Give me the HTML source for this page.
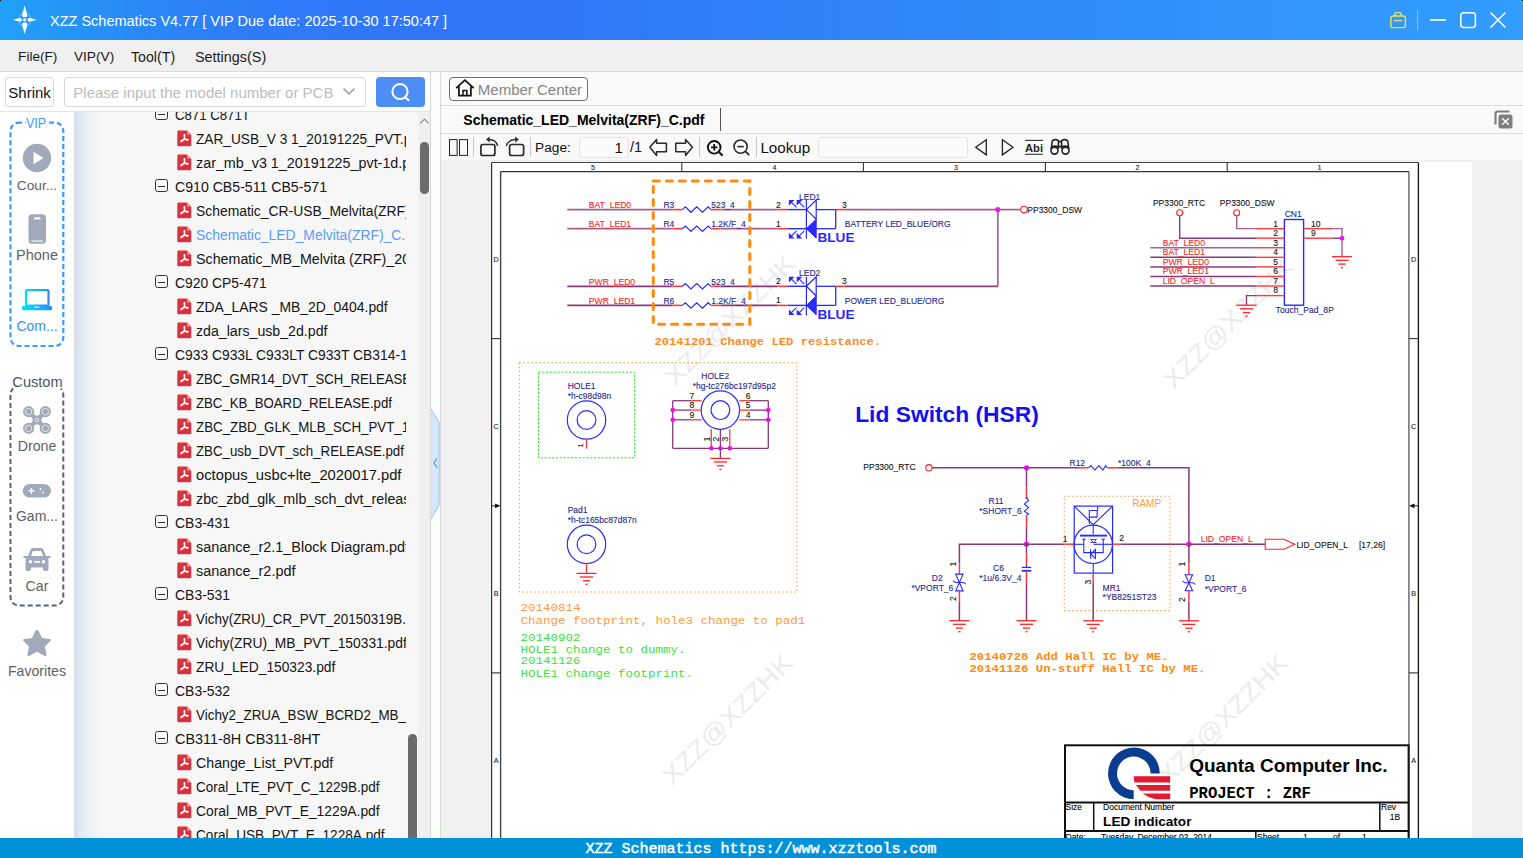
<!DOCTYPE html>
<html><head><meta charset="utf-8">
<style>
html,body{margin:0;padding:0;}
body{width:1523px;height:858px;overflow:hidden;position:relative;background:#fff;font-family:'Liberation Sans', sans-serif;}
.a{position:absolute;}
</style></head><body>

<div class="a" style="left:0;top:0;width:1523px;height:40px;background:linear-gradient(90deg,#20A1F6 0%,#2A89F7 9%,#2F7BF8 17%,#3176F8 26%,#3177F8 36%,#2F8AF9 65%,#319DFF 100%);"></div>
<div class="a" style="left:0;top:0;width:1px;height:1px;background:#000"></div><div class="a" style="left:1522px;top:0;width:1px;height:1px;background:#000"></div>
<svg class="a" style="left:8px;top:3px" width="34" height="34" viewBox="0 0 34 34">
<circle cx="16.7" cy="16.8" r="6.4" fill="none" stroke="rgba(255,255,255,0.4)" stroke-width="1" stroke-dasharray="4.2 5.8" stroke-dashoffset="-2.9"/>
<path d="M16.7 2.6 C17.6 6.5 19.3 10.5 19.3 12.2 C19.3 13.7 18.1 14.2 16.7 14.2 C15.3 14.2 14.1 13.7 14.1 12.2 C14.1 10.5 15.8 6.5 16.7 2.6 Z" fill="#fff"/>
<path d="M16.7 31 C17.6 27.1 19.3 23.1 19.3 21.4 C19.3 19.9 18.1 19.4 16.7 19.4 C15.3 19.4 14.1 19.9 14.1 21.4 C14.1 23.1 15.8 27.1 16.7 31 Z" fill="#fff"/>
<path d="M4.6 16.8 C8 15.9 11 15 12.2 15 C13.4 15 13.9 15.8 13.9 16.8 C13.9 17.8 13.4 18.6 12.2 18.6 C11 18.6 8 17.7 4.6 16.8 Z" fill="#fff"/>
<path d="M28.8 16.8 C25.4 15.9 22.4 15 21.2 15 C20 15 19.5 15.8 19.5 16.8 C19.5 17.8 20 18.6 21.2 18.6 C22.4 18.6 25.4 17.7 28.8 16.8 Z" fill="#fff"/>
<circle cx="16.7" cy="16.8" r="1.6" fill="#fff"/>
</svg>
<div style="position:absolute;left:50px;top:13.18px;font:normal 14.5px 'Liberation Sans', sans-serif;line-height:16.67px;color:#fff;white-space:pre;">XZZ Schematics V4.77 [ VIP Due date: 2025-10-30 17:50:47 ]</div>
<svg class="a" style="left:1380px;top:0" width="143" height="40" viewBox="1380 0 143 40">
<rect x="1390.8" y="16" width="14.6" height="11.6" rx="2.2" fill="none" stroke="#E6E35A" stroke-width="1.4"/>
<path d="M1395 16 V13.8 Q1395 12.6 1396.2 12.6 H1400 Q1401.2 12.6 1401.2 13.8 V16" fill="none" stroke="#E6E35A" stroke-width="1.4"/>
<line x1="1393.8" y1="20.6" x2="1402.4" y2="20.6" stroke="#E6E35A" stroke-width="1.4"/>
<line x1="1417.6" y1="10" x2="1417.6" y2="29.7" stroke="rgba(255,255,255,0.45)" stroke-width="1"/>
<line x1="1430" y1="20" x2="1446" y2="20" stroke="#fff" stroke-width="1.6"/>
<rect x="1460.8" y="12.8" width="14.6" height="14.6" rx="3" fill="none" stroke="#fff" stroke-width="1.5"/>
<path d="M1490.5 12.5 L1505.5 27.5 M1505.5 12.5 L1490.5 27.5" stroke="#fff" stroke-width="1.5"/>
</svg>
<div class="a" style="left:0;top:40px;width:1523px;height:31px;background:#F0F0F0;border-bottom:1px solid #DCDCDC"></div>
<div style="position:absolute;left:18.1px;top:49.39px;font:normal 13.6px 'Liberation Sans', sans-serif;line-height:15.64px;color:#1A1A1A;white-space:pre;">File(F)</div>
<div style="position:absolute;left:73.9px;top:49.30px;font:normal 13.7px 'Liberation Sans', sans-serif;line-height:15.75px;color:#1A1A1A;white-space:pre;">VIP(V)</div>
<div style="position:absolute;left:131px;top:48.85px;font:normal 14.2px 'Liberation Sans', sans-serif;line-height:16.33px;color:#1A1A1A;white-space:pre;">Tool(T)</div>
<div style="position:absolute;left:195px;top:48.67px;font:normal 14.4px 'Liberation Sans', sans-serif;line-height:16.56px;color:#1A1A1A;white-space:pre;">Settings(S)</div>
<div class="a" style="left:0;top:72px;width:430px;height:39px;background:#FEFEFE;border-bottom:1px solid #E3E3E3"></div>
<div class="a" style="left:5px;top:77px;width:47px;height:28px;background:#fff;border:1px solid #DADADA;border-radius:3px"></div>
<div style="position:absolute;left:8.3px;top:83.92px;font:normal 15px 'Liberation Sans', sans-serif;line-height:17.25px;color:#111;white-space:pre;">Shrink</div>
<div class="a" style="left:64px;top:77px;width:300px;height:28px;background:#fff;border:1px solid #DADADA;border-radius:3px"></div>
<div style="position:absolute;left:73.3px;top:83.92px;font:normal 15px 'Liberation Sans', sans-serif;line-height:17.25px;color:#BCBCBC;white-space:pre;">Please input the model number or PCB</div>
<svg class="a" style="left:340px;top:84px" width="18" height="16"><path d="M3.5 4.5 L9 10 L14.5 4.5" fill="none" stroke="#9A9A9A" stroke-width="1.5"/></svg>
<div class="a" style="left:376px;top:77px;width:49px;height:30px;background:#4D8EF6;border-radius:4px"></div>
<svg class="a" style="left:376px;top:77px" width="49" height="30"><circle cx="24" cy="14.5" r="7.6" fill="none" stroke="#fff" stroke-width="2"/><path d="M29 20 L32.5 23.3" stroke="#fff" stroke-width="2.2" stroke-linecap="round"/></svg>
<div class="a" style="left:0;top:112px;width:74px;height:726px;background:#fff;border-right:1px solid #DDDDDD"></div>
<svg class="a" style="left:0;top:112px" width="73" height="500"><rect x="10.5" y="10.6" width="52.8" height="223.4" rx="8.5" fill="none" stroke="#3D9BFA" stroke-width="2.2" stroke-dasharray="5 3" stroke-dashoffset="2"/><rect x="25.5" y="3" width="22" height="14" fill="#fff"/></svg>
<div style="position:absolute;left:26px;top:114.59px;font:normal 14.6px 'Liberation Sans', sans-serif;line-height:16.79px;color:#3D9BFA;white-space:pre;transform:scaleX(0.86);transform-origin:0 0;">VIP</div>
<svg class="a" style="left:22px;top:143px" width="30" height="30"><circle cx="15" cy="15" r="14.2" fill="#A1A9BA"/><path d="M11.5 8.8 L21.5 15 L11.5 21.2 Z" fill="#fff"/></svg>
<div class="a" style="left:-3px;width:80px;text-align:center;top:178.40px;font:13.7px 'Liberation Sans', sans-serif;line-height:15.75px;color:#5E6166;white-space:pre">Cour...</div>
<svg class="a" style="left:28px;top:214px" width="19" height="31"><rect x="0.5" y="0.3" width="17.5" height="29.4" rx="3.5" fill="#A1A9BA"/><rect x="6" y="3.2" width="6.5" height="2.4" rx="1.2" fill="#fff"/><rect x="3.5" y="26.5" width="11.5" height="1.1" fill="#fff"/></svg>
<div class="a" style="left:-3px;width:80px;text-align:center;top:247.18px;font:14.5px 'Liberation Sans', sans-serif;line-height:16.67px;color:#5E6166;white-space:pre">Phone</div>
<svg class="a" style="left:21px;top:288px" width="32" height="24"><defs><linearGradient id="lg1" x1="0" y1="0" x2="1" y2="0"><stop offset="0" stop-color="#00E0F8"/><stop offset="1" stop-color="#2A8CFF"/></linearGradient></defs>
<rect x="5" y="2.2" width="22.5" height="15.5" rx="1" fill="none" stroke="url(#lg1)" stroke-width="2.2"/>
<rect x="1" y="18" width="30.2" height="4.2" rx="1.5" fill="url(#lg1)"/><rect x="13.5" y="18.6" width="5" height="1" fill="#fff"/></svg>
<div class="a" style="left:-3px;width:80px;text-align:center;top:317.53px;font:14px 'Liberation Sans', sans-serif;line-height:16.10px;color:#3A8EF6;white-space:pre">Com...</div>
<svg class="a" style="left:0;top:112px" width="73" height="500"><rect x="10.5" y="274" width="52.8" height="219.6" rx="8.5" fill="none" stroke="#5B6270" stroke-width="2" stroke-dasharray="5 3" stroke-dashoffset="1"/><rect x="13" y="262" width="48" height="15" fill="#fff"/></svg>
<div class="a" style="left:-2.5px;width:80px;text-align:center;top:374.09px;font:14.6px 'Liberation Sans', sans-serif;line-height:16.79px;color:#4D5461;white-space:pre">Custom</div>
<svg class="a" style="left:22px;top:405px" width="30" height="30" viewBox="0 0 30 30">
<g fill="none" stroke="#A1A9BA" stroke-width="4.5" stroke-linecap="round"><path d="M7 7 L23 23 M23 7 L7 23"/></g>
<g fill="#A1A9BA"><circle cx="6.6" cy="6.6" r="5.6"/><circle cx="23.4" cy="6.6" r="5.6"/><circle cx="6.6" cy="23.4" r="5.6"/><circle cx="23.4" cy="23.4" r="5.6"/><circle cx="15" cy="15" r="4.5"/></g>
<g fill="none" stroke="#fff" stroke-width="0.9" opacity="0.8"><circle cx="6.6" cy="6.6" r="3.2"/><circle cx="23.4" cy="6.6" r="3.2"/><circle cx="6.6" cy="23.4" r="3.2"/><circle cx="23.4" cy="23.4" r="3.2"/><circle cx="15" cy="15" r="1.8"/></g>
</svg>
<div class="a" style="left:-3px;width:80px;text-align:center;top:437.95px;font:14.2px 'Liberation Sans', sans-serif;line-height:16.33px;color:#5E6166;white-space:pre">Drone</div>
<svg class="a" style="left:22px;top:483px" width="30" height="16"><rect x="0.7" y="1" width="28.3" height="13.6" rx="6.8" fill="#A1A9BA"/>
<path d="M6.5 7.8 H12.3 M9.4 4.9 V10.7" stroke="#fff" stroke-width="1.5"/><circle cx="18.5" cy="6" r="0.9" fill="#fff"/><circle cx="21" cy="9.5" r="0.9" fill="#fff"/></svg>
<div class="a" style="left:-3px;width:80px;text-align:center;top:507.63px;font:14px 'Liberation Sans', sans-serif;line-height:16.10px;color:#5E6166;white-space:pre">Gam...</div>
<svg class="a" style="left:22px;top:547px" width="30" height="25" viewBox="0 0 30 25">
<path d="M6 9 L8.5 2.5 Q9 1 10.8 1 H19.2 Q21 1 21.5 2.5 L24 9 H28.5 V11 H25.5 L26.5 12 V22 Q26.5 24 24.5 24 H23 Q21 24 21 22 V20.5 H9 V22 Q9 24 7 24 H5.5 Q3.5 24 3.5 22 V12 L4.5 11 H1.5 V9 Z" fill="#A1A9BA"/>
<path d="M9 9 L10.8 4 H19.2 L21 9 Z" fill="#fff"/>
<circle cx="8.5" cy="14.8" r="1.7" fill="#fff"/><circle cx="21.5" cy="14.8" r="1.7" fill="#fff"/><rect x="12" y="14" width="6" height="1.6" fill="#fff"/>
</svg>
<div class="a" style="left:-3px;width:80px;text-align:center;top:577.75px;font:14.2px 'Liberation Sans', sans-serif;line-height:16.33px;color:#5E6166;white-space:pre">Car</div>
<svg class="a" style="left:21px;top:628px" width="32" height="32" viewBox="-1.1 -1.1 32.2 32.2">
<path transform="translate(15 15) scale(1.08) translate(-15 -14.5)" d="M15 1.5 Q16.2 1.5 16.8 2.8 L19.6 9 L26.6 9.8 Q28.6 10.2 27.6 11.8 L22.4 16.8 L23.8 23.8 Q24 26.4 21.9 25.4 L15 21.8 L8.1 25.4 Q6 26.4 6.2 23.8 L7.6 16.8 L2.4 11.8 Q1.4 10.2 3.4 9.8 L10.4 9 L13.2 2.8 Q13.8 1.5 15 1.5 Z" fill="#A1A9BA"/>
</svg>
<div class="a" style="left:-3px;width:80px;text-align:center;top:663.04px;font:14.1px 'Liberation Sans', sans-serif;line-height:16.21px;color:#5E6166;white-space:pre">Favorites</div>
<div class="a" style="left:75px;top:112px;width:343px;height:726px;background:linear-gradient(90deg,#D5DFF1 0px,#E4EAF4 7px,#F0F2F6 17px,#F7F7F7 29px,#F7F7F7 100%)"></div>
<div class="a" style="left:418px;top:112px;width:12px;height:726px;background:#F0F0F0;border-right:1px solid #D6D6D6"></div>
<div class="a" style="left:74px;top:112px;width:332px;height:726px;overflow:hidden">
<div class="a" style="left:81px;top:-4.6px;width:11px;height:11px;border:1.3px solid #333;border-radius:2.5px"></div>
<div class="a" style="left:84.2px;top:1.5px;width:7px;height:1.3px;background:#333"></div>
<div style="position:absolute;left:101.4px;top:-4.92px;font:normal 14.05px 'Liberation Sans', sans-serif;line-height:16.16px;color:#141414;white-space:pre;transform:scaleX(0.94);transform-origin:0 0;">C871 C871T</div>
<svg class="a" style="left:103px;top:18.2px" width="15" height="17" viewBox="0 0 15 17"><path d="M1.6 0.5 H10 L14.3 4.8 V15 Q14.3 16.3 13 16.3 H1.6 Q0.3 16.3 0.3 15 V1.8 Q0.3 0.5 1.6 0.5 Z" fill="#D6323F"/><path d="M10 0.5 V4.8 H14.3" fill="#F08A92"/><path d="M7.3 4.5 Q8.1 4.5 7.7 6.8 L6.1 10.4 Q4.6 12.3 3.8 11.5 Q3.4 10.8 5.5 9.9 L10.4 9.2 Q11.6 9.5 11 10.2 Q10.3 10.6 9.2 9.6 L7.5 7.5 Q6.6 4.7 7.3 4.5 Z" fill="none" stroke="#fff" stroke-width="1.1"/></svg>
<div style="position:absolute;left:121.6px;top:19.08px;font:normal 14.05px 'Liberation Sans', sans-serif;line-height:16.16px;color:#141414;white-space:pre;transform:scaleX(0.974);transform-origin:0 0;">ZAR_USB_V 3 1_20191225_PVT.pdf</div>
<svg class="a" style="left:103px;top:42.2px" width="15" height="17" viewBox="0 0 15 17"><path d="M1.6 0.5 H10 L14.3 4.8 V15 Q14.3 16.3 13 16.3 H1.6 Q0.3 16.3 0.3 15 V1.8 Q0.3 0.5 1.6 0.5 Z" fill="#D6323F"/><path d="M10 0.5 V4.8 H14.3" fill="#F08A92"/><path d="M7.3 4.5 Q8.1 4.5 7.7 6.8 L6.1 10.4 Q4.6 12.3 3.8 11.5 Q3.4 10.8 5.5 9.9 L10.4 9.2 Q11.6 9.5 11 10.2 Q10.3 10.6 9.2 9.6 L7.5 7.5 Q6.6 4.7 7.3 4.5 Z" fill="none" stroke="#fff" stroke-width="1.1"/></svg>
<div style="position:absolute;left:121.6px;top:43.08px;font:normal 14.05px 'Liberation Sans', sans-serif;line-height:16.16px;color:#141414;white-space:pre;transform:scaleX(1.02);transform-origin:0 0;">zar_mb_v3 1_20191225_pvt-1d.pdf</div>
<div class="a" style="left:81px;top:67.4px;width:11px;height:11px;border:1.3px solid #333;border-radius:2.5px"></div>
<div class="a" style="left:84.2px;top:73.5px;width:7px;height:1.3px;background:#333"></div>
<div style="position:absolute;left:101.4px;top:67.08px;font:normal 14.05px 'Liberation Sans', sans-serif;line-height:16.16px;color:#141414;white-space:pre;transform:scaleX(1.005);transform-origin:0 0;">C910 CB5-511 CB5-571</div>
<svg class="a" style="left:103px;top:90.2px" width="15" height="17" viewBox="0 0 15 17"><path d="M1.6 0.5 H10 L14.3 4.8 V15 Q14.3 16.3 13 16.3 H1.6 Q0.3 16.3 0.3 15 V1.8 Q0.3 0.5 1.6 0.5 Z" fill="#D6323F"/><path d="M10 0.5 V4.8 H14.3" fill="#F08A92"/><path d="M7.3 4.5 Q8.1 4.5 7.7 6.8 L6.1 10.4 Q4.6 12.3 3.8 11.5 Q3.4 10.8 5.5 9.9 L10.4 9.2 Q11.6 9.5 11 10.2 Q10.3 10.6 9.2 9.6 L7.5 7.5 Q6.6 4.7 7.3 4.5 Z" fill="none" stroke="#fff" stroke-width="1.1"/></svg>
<div style="position:absolute;left:121.6px;top:91.08px;font:normal 14.05px 'Liberation Sans', sans-serif;line-height:16.16px;color:#141414;white-space:pre;transform:scaleX(0.988);transform-origin:0 0;">Schematic_CR-USB_Melvita(ZRF)_C.pdf</div>
<svg class="a" style="left:103px;top:114.2px" width="15" height="17" viewBox="0 0 15 17"><path d="M1.6 0.5 H10 L14.3 4.8 V15 Q14.3 16.3 13 16.3 H1.6 Q0.3 16.3 0.3 15 V1.8 Q0.3 0.5 1.6 0.5 Z" fill="#D6323F"/><path d="M10 0.5 V4.8 H14.3" fill="#F08A92"/><path d="M7.3 4.5 Q8.1 4.5 7.7 6.8 L6.1 10.4 Q4.6 12.3 3.8 11.5 Q3.4 10.8 5.5 9.9 L10.4 9.2 Q11.6 9.5 11 10.2 Q10.3 10.6 9.2 9.6 L7.5 7.5 Q6.6 4.7 7.3 4.5 Z" fill="none" stroke="#fff" stroke-width="1.1"/></svg>
<div style="position:absolute;left:121.6px;top:115.08px;font:normal 14.05px 'Liberation Sans', sans-serif;line-height:16.16px;color:#5A9CF8;white-space:pre;transform:scaleX(0.989);transform-origin:0 0;">Schematic_LED_Melvita(ZRF)_C.pdf</div>
<svg class="a" style="left:103px;top:138.2px" width="15" height="17" viewBox="0 0 15 17"><path d="M1.6 0.5 H10 L14.3 4.8 V15 Q14.3 16.3 13 16.3 H1.6 Q0.3 16.3 0.3 15 V1.8 Q0.3 0.5 1.6 0.5 Z" fill="#D6323F"/><path d="M10 0.5 V4.8 H14.3" fill="#F08A92"/><path d="M7.3 4.5 Q8.1 4.5 7.7 6.8 L6.1 10.4 Q4.6 12.3 3.8 11.5 Q3.4 10.8 5.5 9.9 L10.4 9.2 Q11.6 9.5 11 10.2 Q10.3 10.6 9.2 9.6 L7.5 7.5 Q6.6 4.7 7.3 4.5 Z" fill="none" stroke="#fff" stroke-width="1.1"/></svg>
<div style="position:absolute;left:121.6px;top:139.08px;font:normal 14.05px 'Liberation Sans', sans-serif;line-height:16.16px;color:#141414;white-space:pre;transform:scaleX(1.016);transform-origin:0 0;">Schematic_MB_Melvita (ZRF)_20</div>
<div class="a" style="left:81px;top:163.4px;width:11px;height:11px;border:1.3px solid #333;border-radius:2.5px"></div>
<div class="a" style="left:84.2px;top:169.5px;width:7px;height:1.3px;background:#333"></div>
<div style="position:absolute;left:101.4px;top:163.08px;font:normal 14.05px 'Liberation Sans', sans-serif;line-height:16.16px;color:#141414;white-space:pre;transform:scaleX(0.988);transform-origin:0 0;">C920 CP5-471</div>
<svg class="a" style="left:103px;top:186.2px" width="15" height="17" viewBox="0 0 15 17"><path d="M1.6 0.5 H10 L14.3 4.8 V15 Q14.3 16.3 13 16.3 H1.6 Q0.3 16.3 0.3 15 V1.8 Q0.3 0.5 1.6 0.5 Z" fill="#D6323F"/><path d="M10 0.5 V4.8 H14.3" fill="#F08A92"/><path d="M7.3 4.5 Q8.1 4.5 7.7 6.8 L6.1 10.4 Q4.6 12.3 3.8 11.5 Q3.4 10.8 5.5 9.9 L10.4 9.2 Q11.6 9.5 11 10.2 Q10.3 10.6 9.2 9.6 L7.5 7.5 Q6.6 4.7 7.3 4.5 Z" fill="none" stroke="#fff" stroke-width="1.1"/></svg>
<div style="position:absolute;left:121.6px;top:187.08px;font:normal 14.05px 'Liberation Sans', sans-serif;line-height:16.16px;color:#141414;white-space:pre;transform:scaleX(0.99);transform-origin:0 0;">ZDA_LARS _MB_2D_0404.pdf</div>
<svg class="a" style="left:103px;top:210.2px" width="15" height="17" viewBox="0 0 15 17"><path d="M1.6 0.5 H10 L14.3 4.8 V15 Q14.3 16.3 13 16.3 H1.6 Q0.3 16.3 0.3 15 V1.8 Q0.3 0.5 1.6 0.5 Z" fill="#D6323F"/><path d="M10 0.5 V4.8 H14.3" fill="#F08A92"/><path d="M7.3 4.5 Q8.1 4.5 7.7 6.8 L6.1 10.4 Q4.6 12.3 3.8 11.5 Q3.4 10.8 5.5 9.9 L10.4 9.2 Q11.6 9.5 11 10.2 Q10.3 10.6 9.2 9.6 L7.5 7.5 Q6.6 4.7 7.3 4.5 Z" fill="none" stroke="#fff" stroke-width="1.1"/></svg>
<div style="position:absolute;left:121.6px;top:211.08px;font:normal 14.05px 'Liberation Sans', sans-serif;line-height:16.16px;color:#141414;white-space:pre;transform:scaleX(1.008);transform-origin:0 0;">zda_lars_usb_2d.pdf</div>
<div class="a" style="left:81px;top:235.4px;width:11px;height:11px;border:1.3px solid #333;border-radius:2.5px"></div>
<div class="a" style="left:84.2px;top:241.5px;width:7px;height:1.3px;background:#333"></div>
<div style="position:absolute;left:101.4px;top:235.08px;font:normal 14.05px 'Liberation Sans', sans-serif;line-height:16.16px;color:#141414;white-space:pre;transform:scaleX(0.986);transform-origin:0 0;">C933 C933L C933LT C933T CB314-1</div>
<svg class="a" style="left:103px;top:258.2px" width="15" height="17" viewBox="0 0 15 17"><path d="M1.6 0.5 H10 L14.3 4.8 V15 Q14.3 16.3 13 16.3 H1.6 Q0.3 16.3 0.3 15 V1.8 Q0.3 0.5 1.6 0.5 Z" fill="#D6323F"/><path d="M10 0.5 V4.8 H14.3" fill="#F08A92"/><path d="M7.3 4.5 Q8.1 4.5 7.7 6.8 L6.1 10.4 Q4.6 12.3 3.8 11.5 Q3.4 10.8 5.5 9.9 L10.4 9.2 Q11.6 9.5 11 10.2 Q10.3 10.6 9.2 9.6 L7.5 7.5 Q6.6 4.7 7.3 4.5 Z" fill="none" stroke="#fff" stroke-width="1.1"/></svg>
<div style="position:absolute;left:121.6px;top:259.08px;font:normal 14.05px 'Liberation Sans', sans-serif;line-height:16.16px;color:#141414;white-space:pre;transform:scaleX(0.934);transform-origin:0 0;">ZBC_GMR14_DVT_SCH_RELEASE</div>
<svg class="a" style="left:103px;top:282.2px" width="15" height="17" viewBox="0 0 15 17"><path d="M1.6 0.5 H10 L14.3 4.8 V15 Q14.3 16.3 13 16.3 H1.6 Q0.3 16.3 0.3 15 V1.8 Q0.3 0.5 1.6 0.5 Z" fill="#D6323F"/><path d="M10 0.5 V4.8 H14.3" fill="#F08A92"/><path d="M7.3 4.5 Q8.1 4.5 7.7 6.8 L6.1 10.4 Q4.6 12.3 3.8 11.5 Q3.4 10.8 5.5 9.9 L10.4 9.2 Q11.6 9.5 11 10.2 Q10.3 10.6 9.2 9.6 L7.5 7.5 Q6.6 4.7 7.3 4.5 Z" fill="none" stroke="#fff" stroke-width="1.1"/></svg>
<div style="position:absolute;left:121.6px;top:283.08px;font:normal 14.05px 'Liberation Sans', sans-serif;line-height:16.16px;color:#141414;white-space:pre;transform:scaleX(0.94);transform-origin:0 0;">ZBC_KB_BOARD_RELEASE.pdf</div>
<svg class="a" style="left:103px;top:306.2px" width="15" height="17" viewBox="0 0 15 17"><path d="M1.6 0.5 H10 L14.3 4.8 V15 Q14.3 16.3 13 16.3 H1.6 Q0.3 16.3 0.3 15 V1.8 Q0.3 0.5 1.6 0.5 Z" fill="#D6323F"/><path d="M10 0.5 V4.8 H14.3" fill="#F08A92"/><path d="M7.3 4.5 Q8.1 4.5 7.7 6.8 L6.1 10.4 Q4.6 12.3 3.8 11.5 Q3.4 10.8 5.5 9.9 L10.4 9.2 Q11.6 9.5 11 10.2 Q10.3 10.6 9.2 9.6 L7.5 7.5 Q6.6 4.7 7.3 4.5 Z" fill="none" stroke="#fff" stroke-width="1.1"/></svg>
<div style="position:absolute;left:121.6px;top:307.08px;font:normal 14.05px 'Liberation Sans', sans-serif;line-height:16.16px;color:#141414;white-space:pre;transform:scaleX(0.948);transform-origin:0 0;">ZBC_ZBD_GLK_MLB_SCH_PVT_1(</div>
<svg class="a" style="left:103px;top:330.2px" width="15" height="17" viewBox="0 0 15 17"><path d="M1.6 0.5 H10 L14.3 4.8 V15 Q14.3 16.3 13 16.3 H1.6 Q0.3 16.3 0.3 15 V1.8 Q0.3 0.5 1.6 0.5 Z" fill="#D6323F"/><path d="M10 0.5 V4.8 H14.3" fill="#F08A92"/><path d="M7.3 4.5 Q8.1 4.5 7.7 6.8 L6.1 10.4 Q4.6 12.3 3.8 11.5 Q3.4 10.8 5.5 9.9 L10.4 9.2 Q11.6 9.5 11 10.2 Q10.3 10.6 9.2 9.6 L7.5 7.5 Q6.6 4.7 7.3 4.5 Z" fill="none" stroke="#fff" stroke-width="1.1"/></svg>
<div style="position:absolute;left:121.6px;top:331.08px;font:normal 14.05px 'Liberation Sans', sans-serif;line-height:16.16px;color:#141414;white-space:pre;transform:scaleX(0.944);transform-origin:0 0;">ZBC_usb_DVT_sch_RELEASE.pdf</div>
<svg class="a" style="left:103px;top:354.2px" width="15" height="17" viewBox="0 0 15 17"><path d="M1.6 0.5 H10 L14.3 4.8 V15 Q14.3 16.3 13 16.3 H1.6 Q0.3 16.3 0.3 15 V1.8 Q0.3 0.5 1.6 0.5 Z" fill="#D6323F"/><path d="M10 0.5 V4.8 H14.3" fill="#F08A92"/><path d="M7.3 4.5 Q8.1 4.5 7.7 6.8 L6.1 10.4 Q4.6 12.3 3.8 11.5 Q3.4 10.8 5.5 9.9 L10.4 9.2 Q11.6 9.5 11 10.2 Q10.3 10.6 9.2 9.6 L7.5 7.5 Q6.6 4.7 7.3 4.5 Z" fill="none" stroke="#fff" stroke-width="1.1"/></svg>
<div style="position:absolute;left:121.6px;top:355.08px;font:normal 14.05px 'Liberation Sans', sans-serif;line-height:16.16px;color:#141414;white-space:pre;transform:scaleX(1.05);transform-origin:0 0;">octopus_usbc+lte_2020017.pdf</div>
<svg class="a" style="left:103px;top:378.2px" width="15" height="17" viewBox="0 0 15 17"><path d="M1.6 0.5 H10 L14.3 4.8 V15 Q14.3 16.3 13 16.3 H1.6 Q0.3 16.3 0.3 15 V1.8 Q0.3 0.5 1.6 0.5 Z" fill="#D6323F"/><path d="M10 0.5 V4.8 H14.3" fill="#F08A92"/><path d="M7.3 4.5 Q8.1 4.5 7.7 6.8 L6.1 10.4 Q4.6 12.3 3.8 11.5 Q3.4 10.8 5.5 9.9 L10.4 9.2 Q11.6 9.5 11 10.2 Q10.3 10.6 9.2 9.6 L7.5 7.5 Q6.6 4.7 7.3 4.5 Z" fill="none" stroke="#fff" stroke-width="1.1"/></svg>
<div style="position:absolute;left:121.6px;top:379.08px;font:normal 14.05px 'Liberation Sans', sans-serif;line-height:16.16px;color:#141414;white-space:pre;transform:scaleX(1.017);transform-origin:0 0;">zbc_zbd_glk_mlb_sch_dvt_release</div>
<div class="a" style="left:81px;top:403.4px;width:11px;height:11px;border:1.3px solid #333;border-radius:2.5px"></div>
<div class="a" style="left:84.2px;top:409.5px;width:7px;height:1.3px;background:#333"></div>
<div style="position:absolute;left:101.4px;top:403.08px;font:normal 14.05px 'Liberation Sans', sans-serif;line-height:16.16px;color:#141414;white-space:pre;transform:scaleX(0.993);transform-origin:0 0;">CB3-431</div>
<svg class="a" style="left:103px;top:426.2px" width="15" height="17" viewBox="0 0 15 17"><path d="M1.6 0.5 H10 L14.3 4.8 V15 Q14.3 16.3 13 16.3 H1.6 Q0.3 16.3 0.3 15 V1.8 Q0.3 0.5 1.6 0.5 Z" fill="#D6323F"/><path d="M10 0.5 V4.8 H14.3" fill="#F08A92"/><path d="M7.3 4.5 Q8.1 4.5 7.7 6.8 L6.1 10.4 Q4.6 12.3 3.8 11.5 Q3.4 10.8 5.5 9.9 L10.4 9.2 Q11.6 9.5 11 10.2 Q10.3 10.6 9.2 9.6 L7.5 7.5 Q6.6 4.7 7.3 4.5 Z" fill="none" stroke="#fff" stroke-width="1.1"/></svg>
<div style="position:absolute;left:121.6px;top:427.08px;font:normal 14.05px 'Liberation Sans', sans-serif;line-height:16.16px;color:#141414;white-space:pre;transform:scaleX(1.026);transform-origin:0 0;">sanance_r2.1_Block Diagram.pdf</div>
<svg class="a" style="left:103px;top:450.2px" width="15" height="17" viewBox="0 0 15 17"><path d="M1.6 0.5 H10 L14.3 4.8 V15 Q14.3 16.3 13 16.3 H1.6 Q0.3 16.3 0.3 15 V1.8 Q0.3 0.5 1.6 0.5 Z" fill="#D6323F"/><path d="M10 0.5 V4.8 H14.3" fill="#F08A92"/><path d="M7.3 4.5 Q8.1 4.5 7.7 6.8 L6.1 10.4 Q4.6 12.3 3.8 11.5 Q3.4 10.8 5.5 9.9 L10.4 9.2 Q11.6 9.5 11 10.2 Q10.3 10.6 9.2 9.6 L7.5 7.5 Q6.6 4.7 7.3 4.5 Z" fill="none" stroke="#fff" stroke-width="1.1"/></svg>
<div style="position:absolute;left:121.6px;top:451.08px;font:normal 14.05px 'Liberation Sans', sans-serif;line-height:16.16px;color:#141414;white-space:pre;transform:scaleX(1.027);transform-origin:0 0;">sanance_r2.pdf</div>
<div class="a" style="left:81px;top:475.4px;width:11px;height:11px;border:1.3px solid #333;border-radius:2.5px"></div>
<div class="a" style="left:84.2px;top:481.5px;width:7px;height:1.3px;background:#333"></div>
<div style="position:absolute;left:101.4px;top:475.08px;font:normal 14.05px 'Liberation Sans', sans-serif;line-height:16.16px;color:#141414;white-space:pre;transform:scaleX(0.993);transform-origin:0 0;">CB3-531</div>
<svg class="a" style="left:103px;top:498.2px" width="15" height="17" viewBox="0 0 15 17"><path d="M1.6 0.5 H10 L14.3 4.8 V15 Q14.3 16.3 13 16.3 H1.6 Q0.3 16.3 0.3 15 V1.8 Q0.3 0.5 1.6 0.5 Z" fill="#D6323F"/><path d="M10 0.5 V4.8 H14.3" fill="#F08A92"/><path d="M7.3 4.5 Q8.1 4.5 7.7 6.8 L6.1 10.4 Q4.6 12.3 3.8 11.5 Q3.4 10.8 5.5 9.9 L10.4 9.2 Q11.6 9.5 11 10.2 Q10.3 10.6 9.2 9.6 L7.5 7.5 Q6.6 4.7 7.3 4.5 Z" fill="none" stroke="#fff" stroke-width="1.1"/></svg>
<div style="position:absolute;left:121.6px;top:499.08px;font:normal 14.05px 'Liberation Sans', sans-serif;line-height:16.16px;color:#141414;white-space:pre;transform:scaleX(0.958);transform-origin:0 0;">Vichy(ZRU)_CR_PVT_20150319B.pdf</div>
<svg class="a" style="left:103px;top:522.2px" width="15" height="17" viewBox="0 0 15 17"><path d="M1.6 0.5 H10 L14.3 4.8 V15 Q14.3 16.3 13 16.3 H1.6 Q0.3 16.3 0.3 15 V1.8 Q0.3 0.5 1.6 0.5 Z" fill="#D6323F"/><path d="M10 0.5 V4.8 H14.3" fill="#F08A92"/><path d="M7.3 4.5 Q8.1 4.5 7.7 6.8 L6.1 10.4 Q4.6 12.3 3.8 11.5 Q3.4 10.8 5.5 9.9 L10.4 9.2 Q11.6 9.5 11 10.2 Q10.3 10.6 9.2 9.6 L7.5 7.5 Q6.6 4.7 7.3 4.5 Z" fill="none" stroke="#fff" stroke-width="1.1"/></svg>
<div style="position:absolute;left:121.6px;top:523.08px;font:normal 14.05px 'Liberation Sans', sans-serif;line-height:16.16px;color:#141414;white-space:pre;transform:scaleX(0.983);transform-origin:0 0;">Vichy(ZRU)_MB_PVT_150331.pdf</div>
<svg class="a" style="left:103px;top:546.2px" width="15" height="17" viewBox="0 0 15 17"><path d="M1.6 0.5 H10 L14.3 4.8 V15 Q14.3 16.3 13 16.3 H1.6 Q0.3 16.3 0.3 15 V1.8 Q0.3 0.5 1.6 0.5 Z" fill="#D6323F"/><path d="M10 0.5 V4.8 H14.3" fill="#F08A92"/><path d="M7.3 4.5 Q8.1 4.5 7.7 6.8 L6.1 10.4 Q4.6 12.3 3.8 11.5 Q3.4 10.8 5.5 9.9 L10.4 9.2 Q11.6 9.5 11 10.2 Q10.3 10.6 9.2 9.6 L7.5 7.5 Q6.6 4.7 7.3 4.5 Z" fill="none" stroke="#fff" stroke-width="1.1"/></svg>
<div style="position:absolute;left:121.6px;top:547.08px;font:normal 14.05px 'Liberation Sans', sans-serif;line-height:16.16px;color:#141414;white-space:pre;transform:scaleX(0.98);transform-origin:0 0;">ZRU_LED_150323.pdf</div>
<div class="a" style="left:81px;top:571.4px;width:11px;height:11px;border:1.3px solid #333;border-radius:2.5px"></div>
<div class="a" style="left:84.2px;top:577.5px;width:7px;height:1.3px;background:#333"></div>
<div style="position:absolute;left:101.4px;top:571.08px;font:normal 14.05px 'Liberation Sans', sans-serif;line-height:16.16px;color:#141414;white-space:pre;transform:scaleX(0.993);transform-origin:0 0;">CB3-532</div>
<svg class="a" style="left:103px;top:594.2px" width="15" height="17" viewBox="0 0 15 17"><path d="M1.6 0.5 H10 L14.3 4.8 V15 Q14.3 16.3 13 16.3 H1.6 Q0.3 16.3 0.3 15 V1.8 Q0.3 0.5 1.6 0.5 Z" fill="#D6323F"/><path d="M10 0.5 V4.8 H14.3" fill="#F08A92"/><path d="M7.3 4.5 Q8.1 4.5 7.7 6.8 L6.1 10.4 Q4.6 12.3 3.8 11.5 Q3.4 10.8 5.5 9.9 L10.4 9.2 Q11.6 9.5 11 10.2 Q10.3 10.6 9.2 9.6 L7.5 7.5 Q6.6 4.7 7.3 4.5 Z" fill="none" stroke="#fff" stroke-width="1.1"/></svg>
<div style="position:absolute;left:121.6px;top:595.08px;font:normal 14.05px 'Liberation Sans', sans-serif;line-height:16.16px;color:#141414;white-space:pre;transform:scaleX(0.955);transform-origin:0 0;">Vichy2_ZRUA_BSW_BCRD2_MB_</div>
<div class="a" style="left:81px;top:619.4px;width:11px;height:11px;border:1.3px solid #333;border-radius:2.5px"></div>
<div class="a" style="left:84.2px;top:625.5px;width:7px;height:1.3px;background:#333"></div>
<div style="position:absolute;left:101.4px;top:619.08px;font:normal 14.05px 'Liberation Sans', sans-serif;line-height:16.16px;color:#141414;white-space:pre;transform:scaleX(1.027);transform-origin:0 0;">CB311-8H CB311-8HT</div>
<svg class="a" style="left:103px;top:642.2px" width="15" height="17" viewBox="0 0 15 17"><path d="M1.6 0.5 H10 L14.3 4.8 V15 Q14.3 16.3 13 16.3 H1.6 Q0.3 16.3 0.3 15 V1.8 Q0.3 0.5 1.6 0.5 Z" fill="#D6323F"/><path d="M10 0.5 V4.8 H14.3" fill="#F08A92"/><path d="M7.3 4.5 Q8.1 4.5 7.7 6.8 L6.1 10.4 Q4.6 12.3 3.8 11.5 Q3.4 10.8 5.5 9.9 L10.4 9.2 Q11.6 9.5 11 10.2 Q10.3 10.6 9.2 9.6 L7.5 7.5 Q6.6 4.7 7.3 4.5 Z" fill="none" stroke="#fff" stroke-width="1.1"/></svg>
<div style="position:absolute;left:121.6px;top:643.08px;font:normal 14.05px 'Liberation Sans', sans-serif;line-height:16.16px;color:#141414;white-space:pre;transform:scaleX(1.01);transform-origin:0 0;">Change_List_PVT.pdf</div>
<svg class="a" style="left:103px;top:666.2px" width="15" height="17" viewBox="0 0 15 17"><path d="M1.6 0.5 H10 L14.3 4.8 V15 Q14.3 16.3 13 16.3 H1.6 Q0.3 16.3 0.3 15 V1.8 Q0.3 0.5 1.6 0.5 Z" fill="#D6323F"/><path d="M10 0.5 V4.8 H14.3" fill="#F08A92"/><path d="M7.3 4.5 Q8.1 4.5 7.7 6.8 L6.1 10.4 Q4.6 12.3 3.8 11.5 Q3.4 10.8 5.5 9.9 L10.4 9.2 Q11.6 9.5 11 10.2 Q10.3 10.6 9.2 9.6 L7.5 7.5 Q6.6 4.7 7.3 4.5 Z" fill="none" stroke="#fff" stroke-width="1.1"/></svg>
<div style="position:absolute;left:121.6px;top:667.08px;font:normal 14.05px 'Liberation Sans', sans-serif;line-height:16.16px;color:#141414;white-space:pre;transform:scaleX(0.961);transform-origin:0 0;">Coral_LTE_PVT_C_1229B.pdf</div>
<svg class="a" style="left:103px;top:690.2px" width="15" height="17" viewBox="0 0 15 17"><path d="M1.6 0.5 H10 L14.3 4.8 V15 Q14.3 16.3 13 16.3 H1.6 Q0.3 16.3 0.3 15 V1.8 Q0.3 0.5 1.6 0.5 Z" fill="#D6323F"/><path d="M10 0.5 V4.8 H14.3" fill="#F08A92"/><path d="M7.3 4.5 Q8.1 4.5 7.7 6.8 L6.1 10.4 Q4.6 12.3 3.8 11.5 Q3.4 10.8 5.5 9.9 L10.4 9.2 Q11.6 9.5 11 10.2 Q10.3 10.6 9.2 9.6 L7.5 7.5 Q6.6 4.7 7.3 4.5 Z" fill="none" stroke="#fff" stroke-width="1.1"/></svg>
<div style="position:absolute;left:121.6px;top:691.08px;font:normal 14.05px 'Liberation Sans', sans-serif;line-height:16.16px;color:#141414;white-space:pre;transform:scaleX(0.984);transform-origin:0 0;">Coral_MB_PVT_E_1229A.pdf</div>
<svg class="a" style="left:103px;top:714.2px" width="15" height="17" viewBox="0 0 15 17"><path d="M1.6 0.5 H10 L14.3 4.8 V15 Q14.3 16.3 13 16.3 H1.6 Q0.3 16.3 0.3 15 V1.8 Q0.3 0.5 1.6 0.5 Z" fill="#D6323F"/><path d="M10 0.5 V4.8 H14.3" fill="#F08A92"/><path d="M7.3 4.5 Q8.1 4.5 7.7 6.8 L6.1 10.4 Q4.6 12.3 3.8 11.5 Q3.4 10.8 5.5 9.9 L10.4 9.2 Q11.6 9.5 11 10.2 Q10.3 10.6 9.2 9.6 L7.5 7.5 Q6.6 4.7 7.3 4.5 Z" fill="none" stroke="#fff" stroke-width="1.1"/></svg>
<div style="position:absolute;left:121.6px;top:715.08px;font:normal 14.05px 'Liberation Sans', sans-serif;line-height:16.16px;color:#141414;white-space:pre;transform:scaleX(0.97);transform-origin:0 0;">Coral_USB_PVT_E_1228A.pdf</div>
</div>
<svg class="a" style="left:418px;top:112px" width="12" height="20"><path d="M2.2 11.3 L6.4 7.2 L10.6 11.3" fill="none" stroke="#7A7A7A" stroke-width="1.1"/></svg>
<div class="a" style="left:419.6px;top:142.4px;width:9.6px;height:52px;background:#6B6B6B;border-radius:5px"></div>
<div class="a" style="left:407.7px;top:733.5px;width:9.7px;height:120px;background:#6B6B6B;border-radius:5px"></div>
<div class="a" style="left:431px;top:72px;width:9px;height:766px;background:#FBFDFB;border-right:1px solid #DADADA"></div><div class="a" style="left:430px;top:72px;width:1px;height:766px;background:#D8D8D8"></div>
<svg class="a" style="left:430px;top:405px" width="11" height="120"><path d="M1 4 L9.2 17.5 V100 L1 114 Z" fill="#D7E7FB"/><path d="M1 4 L9.2 17.5 V100 L1 114" fill="none" stroke="#9CC5F2" stroke-width="1"/><path d="M7 53.5 L4 58 L7 62.5" fill="none" stroke="#4A90E0" stroke-width="1.1"/></svg>
<div class="a" style="left:441px;top:72px;width:1082px;height:88px;background:#F9F9F9"></div>
<div class="a" style="left:441px;top:105px;width:1082px;height:1px;background:#DCDCDC"></div>
<div class="a" style="left:441px;top:133px;width:1082px;height:1px;background:#DCDCDC"></div>
<div class="a" style="left:449px;top:77px;width:137px;height:21.8px;border:1px solid #707070;border-radius:4px;background:#FCFCFC"></div>
<svg class="a" style="left:454.6px;top:78.4px" width="20" height="20" viewBox="0 0 22 22"><path d="M1.8 10.6 L10.9 2.4 L20 10.6" fill="none" stroke="#111" stroke-width="1.9" stroke-linejoin="round" stroke-linecap="round"/><path d="M4.3 9 V19.4 H17.5 V9" fill="none" stroke="#111" stroke-width="1.9" stroke-linejoin="round"/><path d="M8.8 19.4 V13.8 H13 V19.4" fill="none" stroke="#111" stroke-width="1.7"/></svg>
<div style="position:absolute;left:477.8px;top:80.52px;font:normal 15px 'Liberation Sans', sans-serif;line-height:17.25px;color:#858585;white-space:pre;">Member Center</div>
<div style="position:absolute;left:463.3px;top:112.03px;font:bold 14px 'Liberation Sans', sans-serif;line-height:16.10px;color:#000;white-space:pre;">Schematic_LED_Melvita(ZRF)_C.pdf</div>
<div class="a" style="left:720px;top:108px;width:1px;height:23px;background:#555"></div>
<svg class="a" style="left:1492.5px;top:109px" width="22" height="22" viewBox="0 0 22 22"><path d="M2.5 15.5 V5 Q2.5 2.5 5 2.5 H16.5" fill="none" stroke="#7E7E7E" stroke-width="2.2"/><rect x="5.5" y="5.5" width="14" height="14" rx="2.5" fill="#7E7E7E"/><path d="M9.2 9.2 L15.8 15.8 M15.8 9.2 L9.2 15.8" stroke="#fff" stroke-width="1.4"/></svg>
<svg class="a" style="left:0;top:0" width="1523" height="160" viewBox="0 0 1523 160"><rect x="449.5" y="139.6" width="7.6" height="15.8" fill="none" stroke="#222" stroke-width="1"/><rect x="459.5" y="139.6" width="8" height="15.8" fill="none" stroke="#222" stroke-width="1"/><line x1="473.5" y1="137" x2="473.5" y2="157" stroke="#C8C8C8"/><rect x="480.9" y="144.5" width="14" height="11" rx="2" fill="none" stroke="#2A2A2A" stroke-width="1.7"/><path d="M497.6 146 Q496.5 139.8 489 139.5" fill="none" stroke="#2A2A2A" stroke-width="1.4"/><path d="M486 139.6 L489.6 136.6 L489.6 142.5 Z" fill="#2A2A2A"/><rect x="509.6" y="144.5" width="14" height="11" rx="2" fill="none" stroke="#2A2A2A" stroke-width="1.7"/><path d="M506.3 146 Q508.2 139.8 515.5 139.5" fill="none" stroke="#2A2A2A" stroke-width="1.4"/><path d="M518.8 139.6 L515.2 136.6 L515.2 142.5 Z" fill="#2A2A2A"/><line x1="530.5" y1="137" x2="530.5" y2="157" stroke="#C8C8C8"/><line x1="699.5" y1="137" x2="699.5" y2="157" stroke="#C8C8C8"/><line x1="756.5" y1="137" x2="756.5" y2="157" stroke="#C8C8C8"/><path d="M649.8 147.3 L656.6 139.6 V143.2 H666.4 V151.8 H656.6 V155.4 Z" fill="none" stroke="#2A2A2A" stroke-width="1.5" stroke-linejoin="round"/><path d="M692.4 147.3 L685.6 139.6 V143.2 H675.8 V151.8 H685.6 V155.4 Z" fill="none" stroke="#2A2A2A" stroke-width="1.5" stroke-linejoin="round"/><circle cx="714.2" cy="147.3" r="6.3" fill="none" stroke="#111" stroke-width="1.9"/><path d="M718.8 151.9 L722.6 155.7" stroke="#111" stroke-width="2"/><path d="M711 147.3 H717.4 M714.2 144.1 V150.5" stroke="#111" stroke-width="1.8"/><circle cx="740.6" cy="146.6" r="6.6" fill="none" stroke="#2A2A2A" stroke-width="1.6"/><path d="M745.4 151.4 L749.2 155.2" stroke="#2A2A2A" stroke-width="1.8"/><path d="M737.4 146.6 H743.8" stroke="#2A2A2A" stroke-width="1.6"/><path d="M986.3 139.7 L975.7 147.3 L986.3 154.9 Z" fill="none" stroke="#222" stroke-width="1.3"/><path d="M1002.4 139.7 L1013 147.3 L1002.4 154.9 Z" fill="none" stroke="#222" stroke-width="1.3"/><line x1="1025" y1="140.4" x2="1043" y2="140.4" stroke="#333" stroke-width="1.1"/><line x1="1025" y1="154.3" x2="1043" y2="154.3" stroke="#333" stroke-width="1.1"/><text x="1025" y="152.3" font-family="Liberation Sans" font-weight="bold" font-size="11.6" fill="#222" textLength="18" lengthAdjust="spacingAndGlyphs">Abi</text><g fill="none" stroke="#222" stroke-width="1.6" stroke-linejoin="round"><circle cx="1054.5" cy="150.6" r="3.5"/><circle cx="1065.5" cy="150.6" r="3.5"/><path d="M1051.1 149.5 L1052.4 140.6 Q1055.4 138.6 1058.4 140.6 V148.8"/><path d="M1068.9 149.5 L1067.6 140.6 Q1064.6 138.6 1061.6 140.6 V148.8"/><path d="M1051.8 146.9 Q1055 145.4 1058.4 146.9 M1061.6 146.9 Q1065 145.4 1068.2 146.9"/><path d="M1058.4 141.6 H1061.6 M1058.4 146.6 H1061.6"/></g></svg>
<div style="position:absolute;left:535.1px;top:140.10px;font:normal 13.7px 'Liberation Sans', sans-serif;line-height:15.75px;color:#111;white-space:pre;">Page:</div>
<div class="a" style="left:579px;top:136.5px;width:47.5px;height:19.5px;border:1px solid #E2E2E2;border-radius:3px;background:#FAFAFA"></div>
<div style="position:absolute;left:614.5px;top:138.93px;font:normal 15px 'Liberation Sans', sans-serif;line-height:17.25px;color:#111;white-space:pre;">1</div>
<div style="position:absolute;left:630px;top:139.38px;font:normal 14.5px 'Liberation Sans', sans-serif;line-height:16.67px;color:#111;white-space:pre;">/1</div>
<div style="position:absolute;left:760.4px;top:138.74px;font:normal 15.2px 'Liberation Sans', sans-serif;line-height:17.48px;color:#111;white-space:pre;">Lookup</div>
<div class="a" style="left:818px;top:136.5px;width:148px;height:19.5px;border:1px solid #E2E2E2;border-radius:3px;background:#FAFAFA"></div>
<div class="a" style="left:441px;top:160px;width:1081px;height:678px;background:#F1F1F1;border-right:1px solid #FAFAFA"></div>
<div class="a" style="left:491px;top:162px;width:981px;height:676px;background:#fff"></div>
<div class="a" style="left:441px;top:160px;width:1081px;height:678px;overflow:hidden"><svg class="a" style="left:-441px;top:-160px" width="1523" height="858" viewBox="0 0 1523 858"><g fill="none">
<line x1="491.6" y1="162.5" x2="1418.5" y2="162.5" stroke="#444" stroke-width="1.1" />
<line x1="491.6" y1="162.5" x2="491.6" y2="860" stroke="#333" stroke-width="1.2" />
<line x1="1418.4" y1="162.5" x2="1418.4" y2="860" stroke="#111" stroke-width="1.3" />
<line x1="500.6" y1="171.6" x2="1409" y2="171.6" stroke="#333" stroke-width="1.4" />
<line x1="500.6" y1="171.6" x2="500.6" y2="860" stroke="#444" stroke-width="1.4" />
<line x1="1408.9" y1="171.6" x2="1408.9" y2="860" stroke="#777" stroke-width="1.6" />
</g>
<line x1="681.8" y1="162.5" x2="681.8" y2="171.6" stroke="#333" stroke-width="1.1" />
<line x1="863.4" y1="162.5" x2="863.4" y2="171.6" stroke="#333" stroke-width="1.1" />
<line x1="1045.4" y1="162.5" x2="1045.4" y2="171.6" stroke="#333" stroke-width="1.1" />
<line x1="1227.2" y1="162.5" x2="1227.2" y2="171.6" stroke="#333" stroke-width="1.1" />
<text x="593" y="169.8" font-family="Liberation Sans" font-size="7.2" font-weight="normal" fill="#222" stroke="#222" stroke-width="0.1" text-anchor="middle" >5</text>
<text x="774.6" y="169.8" font-family="Liberation Sans" font-size="7.2" font-weight="normal" fill="#222" stroke="#222" stroke-width="0.1" text-anchor="middle" >4</text>
<text x="956" y="169.8" font-family="Liberation Sans" font-size="7.2" font-weight="normal" fill="#222" stroke="#222" stroke-width="0.1" text-anchor="middle" >3</text>
<text x="1137.6" y="169.8" font-family="Liberation Sans" font-size="7.2" font-weight="normal" fill="#222" stroke="#222" stroke-width="0.1" text-anchor="middle" >2</text>
<text x="1319.4" y="169.8" font-family="Liberation Sans" font-size="7.2" font-weight="normal" fill="#222" stroke="#222" stroke-width="0.1" text-anchor="middle" >1</text>
<line x1="491.6" y1="338.6" x2="500.6" y2="338.6" stroke="#333" stroke-width="1.1" />
<line x1="1408.9" y1="338.6" x2="1418.4" y2="338.6" stroke="#333" stroke-width="1.1" />
<line x1="491.6" y1="672.9" x2="500.6" y2="672.9" stroke="#333" stroke-width="1.1" />
<line x1="1408.9" y1="672.9" x2="1418.4" y2="672.9" stroke="#333" stroke-width="1.1" />
<path d="M495 503.4 L500.4 505.8 L495 508.2 Z" fill="#111"/>
<line x1="491.6" y1="505.8" x2="496" y2="505.8" stroke="#222" stroke-width="1" />
<path d="M1414.5 503.4 L1409.1 505.8 L1414.5 508.2 Z" fill="#111"/>
<line x1="1413.5" y1="505.8" x2="1418.4" y2="505.8" stroke="#222" stroke-width="1" />
<text x="496.1" y="261.6" font-family="Liberation Sans" font-size="7.2" font-weight="normal" fill="#222" stroke="#222" stroke-width="0.1" text-anchor="middle" >D</text>
<text x="1413.6" y="261.6" font-family="Liberation Sans" font-size="7.2" font-weight="normal" fill="#222" stroke="#222" stroke-width="0.1" text-anchor="middle" >D</text>
<text x="496.1" y="429.40000000000003" font-family="Liberation Sans" font-size="7.2" font-weight="normal" fill="#222" stroke="#222" stroke-width="0.1" text-anchor="middle" >C</text>
<text x="1413.6" y="429.40000000000003" font-family="Liberation Sans" font-size="7.2" font-weight="normal" fill="#222" stroke="#222" stroke-width="0.1" text-anchor="middle" >C</text>
<text x="496.1" y="596.1" font-family="Liberation Sans" font-size="7.2" font-weight="normal" fill="#222" stroke="#222" stroke-width="0.1" text-anchor="middle" >B</text>
<text x="1413.6" y="596.1" font-family="Liberation Sans" font-size="7.2" font-weight="normal" fill="#222" stroke="#222" stroke-width="0.1" text-anchor="middle" >B</text>
<text x="496.1" y="763.2" font-family="Liberation Sans" font-size="7.2" font-weight="normal" fill="#222" stroke="#222" stroke-width="0.1" text-anchor="middle" >A</text>
<text x="1413.6" y="763.2" font-family="Liberation Sans" font-size="7.2" font-weight="normal" fill="#222" stroke="#222" stroke-width="0.1" text-anchor="middle" >A</text>
<text x="729.7" y="319.7" transform="rotate(-45 729.7 319.7)" font-family="Liberation Sans" font-size="25" fill="#EAECEF" text-anchor="middle" dominant-baseline="central" textLength="172" lengthAdjust="spacingAndGlyphs">XZZ@XZZHK</text>
<text x="1228" y="323" transform="rotate(-45 1228 323)" font-family="Liberation Sans" font-size="25" fill="#EAECEF" text-anchor="middle" dominant-baseline="central" textLength="172" lengthAdjust="spacingAndGlyphs">XZZ@XZZHK</text>
<text x="727" y="719" transform="rotate(-45 727 719)" font-family="Liberation Sans" font-size="25" fill="#EAECEF" text-anchor="middle" dominant-baseline="central" textLength="172" lengthAdjust="spacingAndGlyphs">XZZ@XZZHK</text>
<text x="1222.5" y="719" transform="rotate(-45 1222.5 719)" font-family="Liberation Sans" font-size="25" fill="#EAECEF" text-anchor="middle" dominant-baseline="central" textLength="172" lengthAdjust="spacingAndGlyphs">XZZ@XZZHK</text>
<line x1="567.3" y1="209.6" x2="672.3" y2="209.6" stroke="#A8608A" stroke-width="1.7" />
<line x1="672.3" y1="209.6" x2="682.3" y2="209.6" stroke="#FF3A3A" stroke-width="1.6" />
<polyline points="682.3,209.6 685.4,206.9 690.9,212.29999999999998 696.6999999999999,206.9 702.5,212.29999999999998 708.1999999999999,206.9 710.6999999999999,209.6" fill="none" stroke="#2A2AFF" stroke-width="1.2" stroke-linejoin="miter"/>
<line x1="711.1" y1="209.6" x2="720.8" y2="209.6" stroke="#FF3A3A" stroke-width="1.6" />
<line x1="720.8" y1="209.6" x2="777.7" y2="209.6" stroke="#A8608A" stroke-width="1.7" />
<line x1="777.7" y1="209.6" x2="787.5" y2="209.6" stroke="#FF3A3A" stroke-width="1.6" />
<line x1="787.5" y1="209.6" x2="806.4" y2="209.6" stroke="#2A2AFF" stroke-width="1.4" />
<text x="588.8" y="207.79999999999998" font-family="Liberation Sans" font-size="8.6" font-weight="normal" fill="#FF2222" stroke="#FF2222" stroke-width="0.1" text-anchor="start" >BAT_LED0</text>
<text x="663.4" y="207.79999999999998" font-family="Liberation Sans" font-size="8.5" font-weight="normal" fill="#26268E" stroke="#26268E" stroke-width="0.1" text-anchor="start" >R3</text>
<text x="711.2" y="207.79999999999998" font-family="Liberation Sans" font-size="8.5" font-weight="normal" fill="#26268E" stroke="#26268E" stroke-width="0.1" text-anchor="start" >523_4</text>
<text x="776" y="207.5" font-family="Liberation Sans" font-size="8.5" font-weight="normal" fill="#111" stroke="#111" stroke-width="0.1" text-anchor="start" >2</text>
<line x1="567.3" y1="228.7" x2="672.3" y2="228.7" stroke="#A8608A" stroke-width="1.7" />
<line x1="672.3" y1="228.7" x2="682.3" y2="228.7" stroke="#FF3A3A" stroke-width="1.6" />
<polyline points="682.3,228.7 685.4,226.0 690.9,231.39999999999998 696.6999999999999,226.0 702.5,231.39999999999998 708.1999999999999,226.0 710.6999999999999,228.7" fill="none" stroke="#2A2AFF" stroke-width="1.2" stroke-linejoin="miter"/>
<line x1="711.1" y1="228.7" x2="720.8" y2="228.7" stroke="#FF3A3A" stroke-width="1.6" />
<line x1="720.8" y1="228.7" x2="777.7" y2="228.7" stroke="#A8608A" stroke-width="1.7" />
<line x1="777.7" y1="228.7" x2="787.5" y2="228.7" stroke="#FF3A3A" stroke-width="1.6" />
<line x1="787.5" y1="228.7" x2="806.4" y2="228.7" stroke="#2A2AFF" stroke-width="1.4" />
<text x="588.8" y="226.89999999999998" font-family="Liberation Sans" font-size="8.6" font-weight="normal" fill="#FF2222" stroke="#FF2222" stroke-width="0.1" text-anchor="start" >BAT_LED1</text>
<text x="663.4" y="226.89999999999998" font-family="Liberation Sans" font-size="8.5" font-weight="normal" fill="#26268E" stroke="#26268E" stroke-width="0.1" text-anchor="start" >R4</text>
<text x="711.2" y="226.89999999999998" font-family="Liberation Sans" font-size="8.5" font-weight="normal" fill="#26268E" stroke="#26268E" stroke-width="0.1" text-anchor="start" >1.2K/F_4</text>
<text x="776" y="226.6" font-family="Liberation Sans" font-size="8.5" font-weight="normal" fill="#111" stroke="#111" stroke-width="0.1" text-anchor="start" >1</text>
<line x1="567.3" y1="286.3" x2="672.3" y2="286.3" stroke="#8A3A78" stroke-width="1.7" />
<line x1="672.3" y1="286.3" x2="682.3" y2="286.3" stroke="#FF3A3A" stroke-width="1.6" />
<polyline points="682.3,286.3 685.4,283.6 690.9,289.0 696.6999999999999,283.6 702.5,289.0 708.1999999999999,283.6 710.6999999999999,286.3" fill="none" stroke="#2A2AFF" stroke-width="1.2" stroke-linejoin="miter"/>
<line x1="711.1" y1="286.3" x2="720.8" y2="286.3" stroke="#FF3A3A" stroke-width="1.6" />
<line x1="720.8" y1="286.3" x2="777.7" y2="286.3" stroke="#8A3A78" stroke-width="1.7" />
<line x1="777.7" y1="286.3" x2="787.5" y2="286.3" stroke="#FF3A3A" stroke-width="1.6" />
<line x1="787.5" y1="286.3" x2="806.4" y2="286.3" stroke="#2A2AFF" stroke-width="1.4" />
<text x="588.8" y="284.5" font-family="Liberation Sans" font-size="8.6" font-weight="normal" fill="#FF2222" stroke="#FF2222" stroke-width="0.1" text-anchor="start" >PWR_LED0</text>
<text x="663.4" y="284.5" font-family="Liberation Sans" font-size="8.5" font-weight="normal" fill="#26268E" stroke="#26268E" stroke-width="0.1" text-anchor="start" >R5</text>
<text x="711.2" y="284.5" font-family="Liberation Sans" font-size="8.5" font-weight="normal" fill="#26268E" stroke="#26268E" stroke-width="0.1" text-anchor="start" >523_4</text>
<text x="776" y="284.2" font-family="Liberation Sans" font-size="8.5" font-weight="normal" fill="#111" stroke="#111" stroke-width="0.1" text-anchor="start" >2</text>
<line x1="567.3" y1="305.4" x2="672.3" y2="305.4" stroke="#8A3A78" stroke-width="1.7" />
<line x1="672.3" y1="305.4" x2="682.3" y2="305.4" stroke="#FF3A3A" stroke-width="1.6" />
<polyline points="682.3,305.4 685.4,302.7 690.9,308.09999999999997 696.6999999999999,302.7 702.5,308.09999999999997 708.1999999999999,302.7 710.6999999999999,305.4" fill="none" stroke="#2A2AFF" stroke-width="1.2" stroke-linejoin="miter"/>
<line x1="711.1" y1="305.4" x2="720.8" y2="305.4" stroke="#FF3A3A" stroke-width="1.6" />
<line x1="720.8" y1="305.4" x2="777.7" y2="305.4" stroke="#8A3A78" stroke-width="1.7" />
<line x1="777.7" y1="305.4" x2="787.5" y2="305.4" stroke="#FF3A3A" stroke-width="1.6" />
<line x1="787.5" y1="305.4" x2="806.4" y2="305.4" stroke="#2A2AFF" stroke-width="1.4" />
<text x="588.8" y="303.59999999999997" font-family="Liberation Sans" font-size="8.6" font-weight="normal" fill="#FF2222" stroke="#FF2222" stroke-width="0.1" text-anchor="start" >PWR_LED1</text>
<text x="663.4" y="303.59999999999997" font-family="Liberation Sans" font-size="8.5" font-weight="normal" fill="#26268E" stroke="#26268E" stroke-width="0.1" text-anchor="start" >R6</text>
<text x="711.2" y="303.59999999999997" font-family="Liberation Sans" font-size="8.5" font-weight="normal" fill="#26268E" stroke="#26268E" stroke-width="0.1" text-anchor="start" >1.2K/F_4</text>
<text x="776" y="303.29999999999995" font-family="Liberation Sans" font-size="8.5" font-weight="normal" fill="#111" stroke="#111" stroke-width="0.1" text-anchor="start" >1</text>
<line x1="806.4" y1="200.0" x2="806.4" y2="238.79999999999998" stroke="#2A2AFF" stroke-width="1.2" />
<polygon points="806.4,209.6 816.2,200.0 816.2,219.29999999999998" fill="none" stroke="#2A2AFF" stroke-width="1.2" stroke-linejoin="miter"/>
<polygon points="806.4,228.7 816.2,219.29999999999998 816.2,238.1" fill="#2A2AFF" stroke="#2A2AFF" stroke-width="1"/>
<line x1="816.2" y1="209.6" x2="835.7" y2="209.6" stroke="#2A2AFF" stroke-width="1.3" />
<line x1="816.2" y1="228.7" x2="835.7" y2="228.7" stroke="#2A2AFF" stroke-width="1.3" />
<line x1="835.7" y1="209.6" x2="835.7" y2="228.7" stroke="#2A2AFF" stroke-width="1.3" />
<line x1="835.7" y1="209.6" x2="844.8" y2="209.6" stroke="#FF3A3A" stroke-width="1.6" />
<text x="842" y="207.5" font-family="Liberation Sans" font-size="8.5" font-weight="normal" fill="#111" stroke="#111" stroke-width="0.1" text-anchor="start" >3</text>
<line x1="844.8" y1="209.6" x2="997.8" y2="209.6" stroke="#A8608A" stroke-width="1.7" />
<text x="799" y="199.7" font-family="Liberation Sans" font-size="8.5" font-weight="normal" fill="#26268E" stroke="#26268E" stroke-width="0.1" text-anchor="start" >LED1</text>
<text x="844.8" y="227.29999999999998" font-family="Liberation Sans" font-size="8.5" font-weight="normal" fill="#26268E" stroke="#26268E" stroke-width="0.1" text-anchor="start" >BATTERY LED_BLUE/ORG</text>
<text x="817.5" y="242.0" font-family="Liberation Sans" font-size="13.6" font-weight="bold" fill="#2A2AFF" text-anchor="start" >BLUE</text>
<g stroke="#2A2AFF" stroke-width="1.1"><line x1="796.5" y1="207.4" x2="790.0" y2="201.0"/></g><path d="M788.9000000000001 200.1 H794.5 L788.9000000000001 205.7 Z" fill="#2A2AFF"/>
<g stroke="#2A2AFF" stroke-width="1.1"><line x1="796.5" y1="230.89999999999998" x2="790.0" y2="237.29999999999998"/></g><path d="M788.9000000000001 238.39999999999998 H794.5 L788.9000000000001 232.79999999999998 Z" fill="#2A2AFF"/>
<g stroke="#2A2AFF" stroke-width="1.1"><line x1="804.3" y1="207.4" x2="797.8" y2="201.0"/></g><path d="M796.7 200.1 H802.3 L796.7 205.7 Z" fill="#2A2AFF"/>
<g stroke="#2A2AFF" stroke-width="1.1"><line x1="804.3" y1="230.89999999999998" x2="797.8" y2="237.29999999999998"/></g><path d="M796.7 238.39999999999998 H802.3 L796.7 232.79999999999998 Z" fill="#2A2AFF"/>
<line x1="806.4" y1="276.7" x2="806.4" y2="315.5" stroke="#2A2AFF" stroke-width="1.2" />
<polygon points="806.4,286.3 816.2,276.7 816.2,296.0" fill="none" stroke="#2A2AFF" stroke-width="1.2" stroke-linejoin="miter"/>
<polygon points="806.4,305.40000000000003 816.2,296.00000000000006 816.2,314.8" fill="#2A2AFF" stroke="#2A2AFF" stroke-width="1"/>
<line x1="816.2" y1="286.3" x2="835.7" y2="286.3" stroke="#2A2AFF" stroke-width="1.3" />
<line x1="816.2" y1="305.40000000000003" x2="835.7" y2="305.40000000000003" stroke="#2A2AFF" stroke-width="1.3" />
<line x1="835.7" y1="286.3" x2="835.7" y2="305.40000000000003" stroke="#2A2AFF" stroke-width="1.3" />
<line x1="835.7" y1="286.3" x2="844.8" y2="286.3" stroke="#FF3A3A" stroke-width="1.6" />
<text x="842" y="284.2" font-family="Liberation Sans" font-size="8.5" font-weight="normal" fill="#111" stroke="#111" stroke-width="0.1" text-anchor="start" >3</text>
<line x1="844.8" y1="286.3" x2="997.8" y2="286.3" stroke="#8A3A78" stroke-width="1.7" />
<text x="799" y="276.40000000000003" font-family="Liberation Sans" font-size="8.5" font-weight="normal" fill="#26268E" stroke="#26268E" stroke-width="0.1" text-anchor="start" >LED2</text>
<text x="844.8" y="304.0" font-family="Liberation Sans" font-size="8.5" font-weight="normal" fill="#26268E" stroke="#26268E" stroke-width="0.1" text-anchor="start" >POWER LED_BLUE/ORG</text>
<text x="817.5" y="318.7" font-family="Liberation Sans" font-size="13.6" font-weight="bold" fill="#2A2AFF" text-anchor="start" >BLUE</text>
<g stroke="#2A2AFF" stroke-width="1.1"><line x1="796.5" y1="284.1" x2="790.0" y2="277.7"/></g><path d="M788.9000000000001 276.8 H794.5 L788.9000000000001 282.40000000000003 Z" fill="#2A2AFF"/>
<g stroke="#2A2AFF" stroke-width="1.1"><line x1="796.5" y1="307.6" x2="790.0" y2="314.00000000000006"/></g><path d="M788.9000000000001 315.1 H794.5 L788.9000000000001 309.50000000000006 Z" fill="#2A2AFF"/>
<g stroke="#2A2AFF" stroke-width="1.1"><line x1="804.3" y1="284.1" x2="797.8" y2="277.7"/></g><path d="M796.7 276.8 H802.3 L796.7 282.40000000000003 Z" fill="#2A2AFF"/>
<g stroke="#2A2AFF" stroke-width="1.1"><line x1="804.3" y1="307.6" x2="797.8" y2="314.00000000000006"/></g><path d="M796.7 315.1 H802.3 L796.7 309.50000000000006 Z" fill="#2A2AFF"/>
<line x1="997.8" y1="209.6" x2="997.8" y2="286.3" stroke="#A8608A" stroke-width="1.7" />
<circle cx="997.8" cy="209.6" r="2.6" fill="#FF00FF"/>
<line x1="997.8" y1="209.6" x2="1020.4" y2="209.6" stroke="#A8608A" stroke-width="1.7" />
<circle cx="1024" cy="209.6" r="3.3" fill="#fff" stroke="#FF2222" stroke-width="1.1"/>
<text x="1027.3" y="212.6" font-family="Liberation Sans" font-size="8.5" font-weight="normal" fill="#111" stroke="#111" stroke-width="0.1" text-anchor="start" >PP3300_DSW</text>
<rect x="653.3" y="180.9" width="96.5" height="143.3" fill="none" stroke="#FF8A10" stroke-width="3" stroke-dasharray="6 7" stroke-linecap="round"/>
<text transform="translate(654.4 345) scale(1 0.85)" font-family="Liberation Mono" font-weight="bold" font-size="12.2" fill="#FF8C1A">20141201 Change LED resistance.</text>
<rect x="1284.4" y="219.5" width="19.2" height="85.7" fill="none" stroke="#2A2AFF" stroke-width="1.4"/>
<text x="1284.7" y="217.3" font-family="Liberation Sans" font-size="8.5" font-weight="normal" fill="#26268E" stroke="#26268E" stroke-width="0.1" text-anchor="start" >CN1</text>
<text x="1275.6" y="313" font-family="Liberation Sans" font-size="8.6" font-weight="normal" fill="#26268E" stroke="#26268E" stroke-width="0.1" text-anchor="start" >Touch_Pad_8P</text>
<line x1="1255.9" y1="228.6" x2="1284.4" y2="228.6" stroke="#FF3A3A" stroke-width="1.4" />
<text x="1275.5" y="226.5" font-family="Liberation Sans" font-size="8.5" font-weight="normal" fill="#111" stroke="#111" stroke-width="0.1" text-anchor="middle" >1</text>
<line x1="1255.9" y1="238.17" x2="1284.4" y2="238.17" stroke="#FF3A3A" stroke-width="1.4" />
<text x="1275.5" y="236.07" font-family="Liberation Sans" font-size="8.5" font-weight="normal" fill="#111" stroke="#111" stroke-width="0.1" text-anchor="middle" >2</text>
<line x1="1255.9" y1="247.74" x2="1284.4" y2="247.74" stroke="#FF3A3A" stroke-width="1.4" />
<text x="1275.5" y="245.64000000000001" font-family="Liberation Sans" font-size="8.5" font-weight="normal" fill="#111" stroke="#111" stroke-width="0.1" text-anchor="middle" >3</text>
<line x1="1255.9" y1="257.31" x2="1284.4" y2="257.31" stroke="#FF3A3A" stroke-width="1.4" />
<text x="1275.5" y="255.21" font-family="Liberation Sans" font-size="8.5" font-weight="normal" fill="#111" stroke="#111" stroke-width="0.1" text-anchor="middle" >4</text>
<line x1="1255.9" y1="266.88" x2="1284.4" y2="266.88" stroke="#FF3A3A" stroke-width="1.4" />
<text x="1275.5" y="264.78" font-family="Liberation Sans" font-size="8.5" font-weight="normal" fill="#111" stroke="#111" stroke-width="0.1" text-anchor="middle" >5</text>
<line x1="1255.9" y1="276.45" x2="1284.4" y2="276.45" stroke="#FF3A3A" stroke-width="1.4" />
<text x="1275.5" y="274.34999999999997" font-family="Liberation Sans" font-size="8.5" font-weight="normal" fill="#111" stroke="#111" stroke-width="0.1" text-anchor="middle" >6</text>
<line x1="1255.9" y1="286.02" x2="1284.4" y2="286.02" stroke="#FF3A3A" stroke-width="1.4" />
<text x="1275.5" y="283.91999999999996" font-family="Liberation Sans" font-size="8.5" font-weight="normal" fill="#111" stroke="#111" stroke-width="0.1" text-anchor="middle" >7</text>
<line x1="1255.9" y1="295.59000000000003" x2="1284.4" y2="295.59000000000003" stroke="#FF3A3A" stroke-width="1.4" />
<text x="1275.5" y="293.49" font-family="Liberation Sans" font-size="8.5" font-weight="normal" fill="#111" stroke="#111" stroke-width="0.1" text-anchor="middle" >8</text>
<line x1="1150.3" y1="247.74" x2="1255.9" y2="247.74" stroke="#A8608A" stroke-width="1.5" />
<text x="1162.7" y="245.74" font-family="Liberation Sans" font-size="8.6" font-weight="normal" fill="#FF2222" stroke="#FF2222" stroke-width="0.1" text-anchor="start" >BAT_LED0</text>
<line x1="1150.3" y1="257.31" x2="1255.9" y2="257.31" stroke="#8A3A78" stroke-width="1.5" />
<text x="1162.7" y="255.31" font-family="Liberation Sans" font-size="8.6" font-weight="normal" fill="#FF2222" stroke="#FF2222" stroke-width="0.1" text-anchor="start" >BAT_LED1</text>
<line x1="1150.3" y1="266.88" x2="1255.9" y2="266.88" stroke="#8A3A78" stroke-width="1.5" />
<text x="1162.7" y="264.88" font-family="Liberation Sans" font-size="8.6" font-weight="normal" fill="#FF2222" stroke="#FF2222" stroke-width="0.1" text-anchor="start" >PWR_LED0</text>
<line x1="1150.3" y1="276.45" x2="1255.9" y2="276.45" stroke="#8A3A78" stroke-width="1.5" />
<text x="1162.7" y="274.45" font-family="Liberation Sans" font-size="8.6" font-weight="normal" fill="#FF2222" stroke="#FF2222" stroke-width="0.1" text-anchor="start" >PWR_LED1</text>
<line x1="1150.3" y1="286.02" x2="1255.9" y2="286.02" stroke="#8A3A78" stroke-width="1.5" />
<text x="1162.7" y="284.02" font-family="Liberation Sans" font-size="8.6" font-weight="normal" fill="#FF2222" stroke="#FF2222" stroke-width="0.1" text-anchor="start" >LID_OPEN_L</text>
<circle cx="1179.7" cy="212.7" r="3" fill="#fff" stroke="#FF2222" stroke-width="1.1"/>
<circle cx="1236.7" cy="212.7" r="3" fill="#fff" stroke="#FF2222" stroke-width="1.1"/>
<text x="1152.9" y="205.9" font-family="Liberation Sans" font-size="8.5" font-weight="normal" fill="#111" stroke="#111" stroke-width="0.1" text-anchor="start" >PP3300_RTC</text>
<text x="1219.8" y="205.9" font-family="Liberation Sans" font-size="8.5" font-weight="normal" fill="#111" stroke="#111" stroke-width="0.1" text-anchor="start" >PP3300_DSW</text>
<polyline points="1179.7,215.7 1179.7,238.2 1255.9,238.2" fill="none" stroke="#8A3A78" stroke-width="1.4" stroke-linejoin="miter"/>
<polyline points="1236.7,215.7 1236.7,228.6 1255.9,228.6" fill="none" stroke="#A8608A" stroke-width="1.4" stroke-linejoin="miter"/>
<polyline points="1255.9,295.6 1246.5,295.6 1246.5,305.2" fill="none" stroke="#8A3A78" stroke-width="1.4" stroke-linejoin="miter"/>
<line x1="1236.5" y1="305.2" x2="1256.5" y2="305.2" stroke="#FF2222" stroke-width="1.3" />
<line x1="1240.0" y1="308.8" x2="1253.0" y2="308.8" stroke="#FF2222" stroke-width="1.3" />
<line x1="1243.0" y1="312.59999999999997" x2="1250.0" y2="312.59999999999997" stroke="#FF2222" stroke-width="1.3" />
<line x1="1245.5" y1="316.2" x2="1247.5" y2="316.2" stroke="#FF2222" stroke-width="1.3" />
<line x1="1303.6" y1="228.6" x2="1332.4" y2="228.6" stroke="#FF3A3A" stroke-width="1.4" />
<line x1="1303.6" y1="238.2" x2="1332.4" y2="238.2" stroke="#FF3A3A" stroke-width="1.4" />
<text x="1311" y="226.5" font-family="Liberation Sans" font-size="8.5" font-weight="normal" fill="#111" stroke="#111" stroke-width="0.1" text-anchor="start" >10</text>
<text x="1311" y="236.1" font-family="Liberation Sans" font-size="8.5" font-weight="normal" fill="#111" stroke="#111" stroke-width="0.1" text-anchor="start" >9</text>
<polyline points="1332.4,228.6 1342,228.6 1342,256.7" fill="none" stroke="#A8608A" stroke-width="1.4" stroke-linejoin="miter"/>
<line x1="1332.4" y1="238.2" x2="1342" y2="238.2" stroke="#8A3A78" stroke-width="1.4" />
<circle cx="1342" cy="238.2" r="2.3" fill="#FF00FF"/>
<line x1="1332" y1="256.7" x2="1352" y2="256.7" stroke="#FF2222" stroke-width="1.3" />
<line x1="1335.5" y1="260.3" x2="1348.5" y2="260.3" stroke="#FF2222" stroke-width="1.3" />
<line x1="1338.5" y1="264.09999999999997" x2="1345.5" y2="264.09999999999997" stroke="#FF2222" stroke-width="1.3" />
<line x1="1341" y1="267.7" x2="1343" y2="267.7" stroke="#FF2222" stroke-width="1.3" />
<rect x="519.4" y="362.7" width="277.5" height="229.3" fill="none" stroke="#FFA040" stroke-width="1.1" stroke-dasharray="1.6 2.4"/>
<rect x="538.5" y="372.1" width="96.2" height="85.7" fill="none" stroke="#30E030" stroke-width="1" stroke-dasharray="2.2 1.6"/>
<text x="567.7" y="389.3" font-family="Liberation Sans" font-size="8.5" font-weight="normal" fill="#26268E" stroke="#26268E" stroke-width="0.1" text-anchor="start" >HOLE1</text>
<text x="567.7" y="398.7" font-family="Liberation Sans" font-size="8.5" font-weight="normal" fill="#26268E" stroke="#26268E" stroke-width="0.1" text-anchor="start" >*h-c98d98n</text>
<circle cx="586.5" cy="420" r="19.2" fill="none" stroke="#2A2AFF" stroke-width="1.2"/><circle cx="586.5" cy="420" r="9.4" fill="none" stroke="#2A2AFF" stroke-width="1.2"/>
<line x1="586.5" y1="439.2" x2="586.5" y2="448.6" stroke="#FF3A3A" stroke-width="1.3" />
<text x="582.5" y="447.5" font-family="Liberation Sans" font-size="7.5" font-weight="normal" fill="#111" stroke="#111" stroke-width="0.1" text-anchor="start" transform="rotate(-90 582.5 447.5)">1</text>
<text x="701.3" y="379.3" font-family="Liberation Sans" font-size="8.5" font-weight="normal" fill="#26268E" stroke="#26268E" stroke-width="0.1" text-anchor="start" >HOLE2</text>
<text x="692.7" y="389.3" font-family="Liberation Sans" font-size="8.5" font-weight="normal" fill="#26268E" stroke="#26268E" stroke-width="0.1" text-anchor="start" >*hg-tc276bc197d95p2</text>
<circle cx="720.4" cy="410.1" r="19.2" fill="none" stroke="#2A2AFF" stroke-width="1.2"/><circle cx="720.4" cy="410.1" r="9.4" fill="none" stroke="#2A2AFF" stroke-width="1.2"/>
<line x1="672.7" y1="400.7" x2="691.3" y2="400.7" stroke="#8A3A78" stroke-width="1.3" />
<line x1="691.3" y1="400.7" x2="701.5" y2="400.7" stroke="#FF3A3A" stroke-width="1.3" />
<line x1="739.3" y1="400.7" x2="749.5" y2="400.7" stroke="#FF3A3A" stroke-width="1.3" />
<line x1="749.5" y1="400.7" x2="768.3" y2="400.7" stroke="#8A3A78" stroke-width="1.3" />
<text x="691.8" y="398.9" font-family="Liberation Sans" font-size="8.5" font-weight="normal" fill="#111" stroke="#111" stroke-width="0.1" text-anchor="middle" >7</text>
<text x="748" y="398.9" font-family="Liberation Sans" font-size="8.5" font-weight="normal" fill="#111" stroke="#111" stroke-width="0.1" text-anchor="middle" >6</text>
<line x1="672.7" y1="410.1" x2="691.3" y2="410.1" stroke="#8A3A78" stroke-width="1.3" />
<line x1="691.3" y1="410.1" x2="701.5" y2="410.1" stroke="#FF3A3A" stroke-width="1.3" />
<line x1="739.3" y1="410.1" x2="749.5" y2="410.1" stroke="#FF3A3A" stroke-width="1.3" />
<line x1="749.5" y1="410.1" x2="768.3" y2="410.1" stroke="#8A3A78" stroke-width="1.3" />
<text x="691.8" y="408.3" font-family="Liberation Sans" font-size="8.5" font-weight="normal" fill="#111" stroke="#111" stroke-width="0.1" text-anchor="middle" >8</text>
<text x="748" y="408.3" font-family="Liberation Sans" font-size="8.5" font-weight="normal" fill="#111" stroke="#111" stroke-width="0.1" text-anchor="middle" >5</text>
<line x1="672.7" y1="419.8" x2="691.3" y2="419.8" stroke="#8A3A78" stroke-width="1.3" />
<line x1="691.3" y1="419.8" x2="701.5" y2="419.8" stroke="#FF3A3A" stroke-width="1.3" />
<line x1="739.3" y1="419.8" x2="749.5" y2="419.8" stroke="#FF3A3A" stroke-width="1.3" />
<line x1="749.5" y1="419.8" x2="768.3" y2="419.8" stroke="#8A3A78" stroke-width="1.3" />
<text x="691.8" y="418.0" font-family="Liberation Sans" font-size="8.5" font-weight="normal" fill="#111" stroke="#111" stroke-width="0.1" text-anchor="middle" >9</text>
<text x="748" y="418.0" font-family="Liberation Sans" font-size="8.5" font-weight="normal" fill="#111" stroke="#111" stroke-width="0.1" text-anchor="middle" >4</text>
<line x1="672.7" y1="400.7" x2="672.7" y2="448.3" stroke="#8A3A78" stroke-width="1.3" />
<line x1="768.3" y1="400.7" x2="768.3" y2="448.3" stroke="#8A3A78" stroke-width="1.3" />
<line x1="672.7" y1="448.3" x2="768.3" y2="448.3" stroke="#8A3A78" stroke-width="1.3" />
<line x1="711.3" y1="429.3" x2="711.3" y2="448.3" stroke="#FF3A3A" stroke-width="1.3" />
<text x="709.6999999999999" y="439.2" font-family="Liberation Sans" font-size="8.5" font-weight="normal" fill="#111" stroke="#111" stroke-width="0.1" text-anchor="middle" transform="rotate(-90 709.6999999999999 439.2)">1</text>
<circle cx="711.3" cy="448.3" r="2.3" fill="#FF00FF"/>
<line x1="720.4" y1="429.3" x2="720.4" y2="448.3" stroke="#8A3A78" stroke-width="1.3" />
<text x="718.8" y="439.2" font-family="Liberation Sans" font-size="8.5" font-weight="normal" fill="#111" stroke="#111" stroke-width="0.1" text-anchor="middle" transform="rotate(-90 718.8 439.2)">2</text>
<circle cx="720.4" cy="448.3" r="2.3" fill="#FF00FF"/>
<line x1="729.8" y1="429.3" x2="729.8" y2="448.3" stroke="#FF3A3A" stroke-width="1.3" />
<text x="728.1999999999999" y="439.2" font-family="Liberation Sans" font-size="8.5" font-weight="normal" fill="#111" stroke="#111" stroke-width="0.1" text-anchor="middle" transform="rotate(-90 728.1999999999999 439.2)">3</text>
<circle cx="729.8" cy="448.3" r="2.3" fill="#FF00FF"/>
<line x1="720.4" y1="448.3" x2="720.4" y2="458.4" stroke="#8A3A78" stroke-width="1.3" />
<line x1="710.4" y1="458.4" x2="730.4" y2="458.4" stroke="#FF2222" stroke-width="1.3" />
<line x1="713.9" y1="462.0" x2="726.9" y2="462.0" stroke="#FF2222" stroke-width="1.3" />
<line x1="716.9" y1="465.79999999999995" x2="723.9" y2="465.79999999999995" stroke="#FF2222" stroke-width="1.3" />
<line x1="719.4" y1="469.4" x2="721.4" y2="469.4" stroke="#FF2222" stroke-width="1.3" />
<circle cx="672.7" cy="410.1" r="2.3" fill="#FF00FF"/>
<circle cx="768.3" cy="410.1" r="2.3" fill="#FF00FF"/>
<circle cx="672.7" cy="419.8" r="2.3" fill="#FF00FF"/>
<circle cx="768.3" cy="419.8" r="2.3" fill="#FF00FF"/>
<text x="567.7" y="513.4" font-family="Liberation Sans" font-size="8.5" font-weight="normal" fill="#26268E" stroke="#26268E" stroke-width="0.1" text-anchor="start" >Pad1</text>
<text x="567.7" y="522.9" font-family="Liberation Sans" font-size="8.5" font-weight="normal" fill="#26268E" stroke="#26268E" stroke-width="0.1" text-anchor="start" >*h-tc165bc87d87n</text>
<circle cx="586.5" cy="544.3" r="19.2" fill="none" stroke="#2A2AFF" stroke-width="1.2"/><circle cx="586.5" cy="544.3" r="9.4" fill="none" stroke="#2A2AFF" stroke-width="1.2"/>
<line x1="586.5" y1="563.5" x2="586.5" y2="573.4" stroke="#FF3A3A" stroke-width="1.3" />
<line x1="576.5" y1="573.4" x2="596.5" y2="573.4" stroke="#FF2222" stroke-width="1.3" />
<line x1="580.0" y1="577.0" x2="593.0" y2="577.0" stroke="#FF2222" stroke-width="1.3" />
<line x1="583.0" y1="580.8" x2="590.0" y2="580.8" stroke="#FF2222" stroke-width="1.3" />
<line x1="585.5" y1="584.4" x2="587.5" y2="584.4" stroke="#FF2222" stroke-width="1.3" />
<text transform="translate(520.5 611.4) scale(1 0.82)" x="0" y="0" font-family="Liberation Mono" font-size="12.5" fill="#FF9A40">20140814</text>
<text transform="translate(520.5 624) scale(1 0.82)" x="0" y="0" font-family="Liberation Mono" font-size="12.5" fill="#FF9A40">Change footprint, hole3 change to pad1</text>
<text transform="translate(520.5 640.8) scale(1 0.82)" x="0" y="0" font-family="Liberation Mono" font-size="12.5" fill="#3EE03E">20140902</text>
<text transform="translate(520.5 652.8) scale(1 0.82)" x="0" y="0" font-family="Liberation Mono" font-size="12.5" fill="#3EE03E">HOLE1 change to dummy.</text>
<text transform="translate(520.5 664.3) scale(1 0.82)" x="0" y="0" font-family="Liberation Mono" font-size="12.5" fill="#3EE03E">20141126</text>
<text transform="translate(520.5 677) scale(1 0.82)" x="0" y="0" font-family="Liberation Mono" font-size="12.5" fill="#3EE03E">HOLE1 change footprint.</text>
<text x="855.2" y="422" font-family="Liberation Sans" font-size="22.8" font-weight="bold" fill="#1010F0" text-anchor="start" >Lid Switch (HSR)</text>
<circle cx="928.9" cy="467.8" r="3.2" fill="#fff" stroke="#FF2222" stroke-width="1.1"/>
<text x="863.3" y="470.2" font-family="Liberation Sans" font-size="8.5" font-weight="normal" fill="#111" stroke="#111" stroke-width="0.1" text-anchor="start" >PP3300_RTC</text>
<line x1="932.1" y1="467.8" x2="1079" y2="467.8" stroke="#8A3A78" stroke-width="1.5" />
<circle cx="1026.5" cy="467.8" r="2.6" fill="#FF00FF"/>
<line x1="1079" y1="467.8" x2="1088.5" y2="467.8" stroke="#FF3A3A" stroke-width="1.5" />
<polyline points="1088.5,467.8 1090.9,465.6 1094.9,470 1098.9,465.6 1102.9,470 1105.6,465.6 1107.4,467.8" fill="none" stroke="#2A2AFF" stroke-width="1.1" stroke-linejoin="miter"/>
<line x1="1107.4" y1="467.8" x2="1117.5" y2="467.8" stroke="#FF3A3A" stroke-width="1.5" />
<polyline points="1117.5,467.8 1188.9,467.8 1188.9,544.2" fill="none" stroke="#8A3A78" stroke-width="1.5" stroke-linejoin="miter"/>
<text x="1069.5" y="466" font-family="Liberation Sans" font-size="8.5" font-weight="normal" fill="#26268E" stroke="#26268E" stroke-width="0.1" text-anchor="start" >R12</text>
<text x="1118" y="466" font-family="Liberation Sans" font-size="8.5" font-weight="normal" fill="#26268E" stroke="#26268E" stroke-width="0.1" text-anchor="start" >*100K_4</text>
<line x1="1026.5" y1="467.8" x2="1026.5" y2="487.6" stroke="#8A3A78" stroke-width="1.5" />
<line x1="1026.5" y1="487.6" x2="1026.5" y2="497.8" stroke="#FF3A3A" stroke-width="1.5" />
<polyline points="1026.5,497.8 1028.6,500.4 1024.4,504 1028.6,507.6 1024.4,511.2 1028.6,514 1026.5,515.3" fill="none" stroke="#2A2AFF" stroke-width="1.1" stroke-linejoin="miter"/>
<circle cx="1026.5" cy="498" r="1.1" fill="#2A2AFF"/>
<line x1="1026.5" y1="515.3" x2="1026.5" y2="527" stroke="#FF3A3A" stroke-width="1.5" />
<line x1="1026.5" y1="527" x2="1026.5" y2="544.2" stroke="#8A3A78" stroke-width="1.5" />
<text x="988.6" y="504.3" font-family="Liberation Sans" font-size="8.5" font-weight="normal" fill="#26268E" stroke="#26268E" stroke-width="0.1" text-anchor="start" >R11</text>
<text x="979.3" y="513.9" font-family="Liberation Sans" font-size="8.5" font-weight="normal" fill="#26268E" stroke="#26268E" stroke-width="0.1" text-anchor="start" >*SHORT_6</text>
<circle cx="1026.5" cy="544.2" r="2.6" fill="#FF00FF"/>
<polyline points="959.4,563.1 959.4,544.2 1064.3,544.2" fill="none" stroke="#8A3A78" stroke-width="1.5" stroke-linejoin="miter"/>
<line x1="959.4" y1="563.1" x2="959.4" y2="574.1" stroke="#FF3A3A" stroke-width="1.5" />
<polygon points="955.6999999999999,574.1 963.1,574.1 959.4,582.5" fill="none" stroke="#2A2AFF" stroke-width="1.1"/>
<polygon points="955.6999999999999,590.9 963.1,590.9 959.4,582.5" fill="none" stroke="#2A2AFF" stroke-width="1.1"/>
<polyline points="952.9,580.9 955.4,582.5 963.4,582.5 965.9,584.1" fill="none" stroke="#2A2AFF" stroke-width="1.1" stroke-linejoin="miter"/>
<line x1="959.4" y1="590.9" x2="959.4" y2="601.9" stroke="#FF3A3A" stroke-width="1.5" />
<line x1="959.4" y1="601.9" x2="959.4" y2="620.7" stroke="#8A3A78" stroke-width="1.5" />
<line x1="949.4" y1="620.7" x2="969.4" y2="620.7" stroke="#FF2222" stroke-width="1.3" />
<line x1="952.9" y1="624.3000000000001" x2="965.9" y2="624.3000000000001" stroke="#FF2222" stroke-width="1.3" />
<line x1="955.9" y1="628.1" x2="962.9" y2="628.1" stroke="#FF2222" stroke-width="1.3" />
<line x1="958.4" y1="631.7" x2="960.4" y2="631.7" stroke="#FF2222" stroke-width="1.3" />
<text x="955.6" y="566.5" font-family="Liberation Sans" font-size="8.5" font-weight="normal" fill="#111" stroke="#111" stroke-width="0.1" text-anchor="start" transform="rotate(-90 955.6 566.5)">1</text>
<text x="955.6" y="601" font-family="Liberation Sans" font-size="8.5" font-weight="normal" fill="#111" stroke="#111" stroke-width="0.1" text-anchor="start" transform="rotate(-90 955.6 601)">2</text>
<text x="931.8" y="580.9" font-family="Liberation Sans" font-size="8.5" font-weight="normal" fill="#26268E" stroke="#26268E" stroke-width="0.1" text-anchor="start" >D2</text>
<text x="911.4" y="591.1" font-family="Liberation Sans" font-size="8.5" font-weight="normal" fill="#26268E" stroke="#26268E" stroke-width="0.1" text-anchor="start" >*VPORT_6</text>
<line x1="1026.5" y1="544.2" x2="1026.5" y2="553.6" stroke="#8A3A78" stroke-width="1.5" />
<line x1="1026.5" y1="553.6" x2="1026.5" y2="565" stroke="#FF3A3A" stroke-width="1.5" />
<line x1="1026.5" y1="565" x2="1026.5" y2="567.5" stroke="#2A2AFF" stroke-width="1.2" />
<line x1="1021.8" y1="567.4" x2="1031.2" y2="567.4" stroke="#2A2AFF" stroke-width="1.3" />
<line x1="1021.8" y1="570.8" x2="1031.2" y2="570.8" stroke="#2A2AFF" stroke-width="1.8" />
<line x1="1026.5" y1="571.2" x2="1026.5" y2="583" stroke="#FF3A3A" stroke-width="1.5" />
<line x1="1026.5" y1="583" x2="1026.5" y2="620.7" stroke="#8A3A78" stroke-width="1.5" />
<line x1="1016.5" y1="620.7" x2="1036.5" y2="620.7" stroke="#FF2222" stroke-width="1.3" />
<line x1="1020.0" y1="624.3000000000001" x2="1033.0" y2="624.3000000000001" stroke="#FF2222" stroke-width="1.3" />
<line x1="1023.0" y1="628.1" x2="1030.0" y2="628.1" stroke="#FF2222" stroke-width="1.3" />
<line x1="1025.5" y1="631.7" x2="1027.5" y2="631.7" stroke="#FF2222" stroke-width="1.3" />
<text x="993" y="570.7" font-family="Liberation Sans" font-size="8.5" font-weight="normal" fill="#26268E" stroke="#26268E" stroke-width="0.1" text-anchor="start" >C6</text>
<text x="979.3" y="581" font-family="Liberation Sans" font-size="8.5" font-weight="normal" fill="#26268E" stroke="#26268E" stroke-width="0.1" text-anchor="start" >*1u/6.3V_4</text>
<rect x="1064.3" y="496.3" width="105.7" height="114.3" fill="none" stroke="#FFA040" stroke-width="1.1" stroke-dasharray="1.6 2.4"/>
<text x="1132.2" y="506.7" font-family="Liberation Sans" font-size="10" font-weight="normal" fill="#FF9A40" text-anchor="start" >RAMP</text>
<line x1="1064.3" y1="544.2" x2="1074.2" y2="544.2" stroke="#FF3A3A" stroke-width="1.5" />
<rect x="1074.2" y="506.1" width="38.4" height="67" fill="none" stroke="#2A2AFF" stroke-width="1.2"/>
<circle cx="1093.2" cy="544.3" r="19.2" fill="none" stroke="#2A2AFF" stroke-width="1.2"/>
<polyline points="1074.2,506.1 1093.2,524.7 1112.6,506.1" fill="none" stroke="#2A2AFF" stroke-width="1.1" stroke-linejoin="miter"/>
<line x1="1093.2" y1="524.7" x2="1093.2" y2="534.3" stroke="#2A2AFF" stroke-width="1.1" />
<path d="M1089.3 524 V510.5 H1097.1 V517.1 H1089.3 M1097.7 506.1 V510.5" fill="none" stroke="#2A2AFF" stroke-width="1.1"/>
<line x1="1080" y1="535.6" x2="1107" y2="535.6" stroke="#2A2AFF" stroke-width="1.9" />
<path d="M1082.2 539.3 H1085.8 M1083.8 539.3 V552.6 H1103.2 V539.3 M1101.4 539.3 H1105" fill="none" stroke="#2A2AFF" stroke-width="1.1"/>
<path d="M1090.5 539.5 H1096.5 L1093.5 542.5 Z M1090.5 542.5 H1096.5" fill="none" stroke="#2A2AFF" stroke-width="0.9"/>
<path d="M1095.4 549.5 L1090.8 554 L1095.4 558.5 Z M1090.6 549.3 V558.7" fill="none" stroke="#2A2AFF" stroke-width="1.1"/>
<line x1="1074.2" y1="544.3" x2="1083.8" y2="544.3" stroke="#2A2AFF" stroke-width="1.1" />
<line x1="1093.5" y1="544.3" x2="1112.6" y2="544.3" stroke="#2A2AFF" stroke-width="1.1" />
<line x1="1093.2" y1="563.5" x2="1093.2" y2="573.1" stroke="#2A2AFF" stroke-width="1.1" />
<line x1="1112.6" y1="544.2" x2="1120.4" y2="544.2" stroke="#FF3A3A" stroke-width="1.5" />
<line x1="1120.4" y1="544.2" x2="1188.9" y2="544.2" stroke="#8A3A78" stroke-width="1.5" />
<line x1="1093.2" y1="573.1" x2="1093.2" y2="582.5" stroke="#FF3A3A" stroke-width="1.5" />
<line x1="1093.2" y1="582.5" x2="1093.2" y2="620.8" stroke="#8A3A78" stroke-width="1.5" />
<line x1="1083.2" y1="620.8" x2="1103.2" y2="620.8" stroke="#FF2222" stroke-width="1.3" />
<line x1="1086.7" y1="624.4" x2="1099.7" y2="624.4" stroke="#FF2222" stroke-width="1.3" />
<line x1="1089.7" y1="628.1999999999999" x2="1096.7" y2="628.1999999999999" stroke="#FF2222" stroke-width="1.3" />
<line x1="1092.2" y1="631.8" x2="1094.2" y2="631.8" stroke="#FF2222" stroke-width="1.3" />
<text x="1062.8" y="542" font-family="Liberation Sans" font-size="8.5" font-weight="normal" fill="#111" stroke="#111" stroke-width="0.1" text-anchor="start" >1</text>
<text x="1119.2" y="541" font-family="Liberation Sans" font-size="8.5" font-weight="normal" fill="#111" stroke="#111" stroke-width="0.1" text-anchor="start" >2</text>
<text x="1091" y="584.5" font-family="Liberation Sans" font-size="8.5" font-weight="normal" fill="#111" stroke="#111" stroke-width="0.1" text-anchor="start" transform="rotate(-90 1091 584.5)">3</text>
<text x="1102.6" y="590.6" font-family="Liberation Sans" font-size="8.5" font-weight="normal" fill="#26268E" stroke="#26268E" stroke-width="0.1" text-anchor="start" >MR1</text>
<text x="1102.6" y="600" font-family="Liberation Sans" font-size="8.5" font-weight="normal" fill="#26268E" stroke="#26268E" stroke-width="0.1" text-anchor="start" >*YB8251ST23</text>
<circle cx="1188.9" cy="544.2" r="2.6" fill="#FF00FF"/>
<line x1="1188.9" y1="544.2" x2="1265.2" y2="544.2" stroke="#8A3A78" stroke-width="1.5" />
<text x="1200.7" y="542.1" font-family="Liberation Sans" font-size="8.6" font-weight="normal" fill="#FF2222" stroke="#FF2222" stroke-width="0.1" text-anchor="start" >LID_OPEN_L</text>
<polygon points="1265.2,539.3 1284,539.3 1294.8,544.2 1284,549.2 1265.2,549.2" fill="#fff" stroke="#FF2222" stroke-width="1.1"/>
<text x="1296.4" y="547.5" font-family="Liberation Sans" font-size="8.5" font-weight="normal" fill="#111" stroke="#111" stroke-width="0.1" text-anchor="start" >LID_OPEN_L</text>
<text x="1359" y="547.5" font-family="Liberation Sans" font-size="8.5" font-weight="normal" fill="#111" stroke="#111" stroke-width="0.1" text-anchor="start" >[17,26]</text>
<line x1="1188.9" y1="544.2" x2="1188.9" y2="563" stroke="#8A3A78" stroke-width="1.5" />
<line x1="1188.9" y1="563" x2="1188.9" y2="574.7" stroke="#FF3A3A" stroke-width="1.5" />
<polygon points="1185.2,574.7 1192.6000000000001,574.7 1188.9,582.75" fill="none" stroke="#2A2AFF" stroke-width="1.1"/>
<polygon points="1185.2,590.8 1192.6000000000001,590.8 1188.9,582.75" fill="none" stroke="#2A2AFF" stroke-width="1.1"/>
<polyline points="1182.4,581.15 1184.9,582.75 1192.9,582.75 1195.4,584.35" fill="none" stroke="#2A2AFF" stroke-width="1.1" stroke-linejoin="miter"/>
<line x1="1188.9" y1="590.8" x2="1188.9" y2="601.5" stroke="#FF3A3A" stroke-width="1.5" />
<line x1="1188.9" y1="601.5" x2="1188.9" y2="620.8" stroke="#8A3A78" stroke-width="1.5" />
<line x1="1178.9" y1="620.8" x2="1198.9" y2="620.8" stroke="#FF2222" stroke-width="1.3" />
<line x1="1182.4" y1="624.4" x2="1195.4" y2="624.4" stroke="#FF2222" stroke-width="1.3" />
<line x1="1185.4" y1="628.1999999999999" x2="1192.4" y2="628.1999999999999" stroke="#FF2222" stroke-width="1.3" />
<line x1="1187.9" y1="631.8" x2="1189.9" y2="631.8" stroke="#FF2222" stroke-width="1.3" />
<text x="1185" y="566.5" font-family="Liberation Sans" font-size="8.5" font-weight="normal" fill="#111" stroke="#111" stroke-width="0.1" text-anchor="start" transform="rotate(-90 1185 566.5)">1</text>
<text x="1185" y="602" font-family="Liberation Sans" font-size="8.5" font-weight="normal" fill="#111" stroke="#111" stroke-width="0.1" text-anchor="start" transform="rotate(-90 1185 602)">2</text>
<text x="1204.7" y="580.6" font-family="Liberation Sans" font-size="8.5" font-weight="normal" fill="#26268E" stroke="#26268E" stroke-width="0.1" text-anchor="start" >D1</text>
<text x="1204.7" y="591.7" font-family="Liberation Sans" font-size="8.5" font-weight="normal" fill="#26268E" stroke="#26268E" stroke-width="0.1" text-anchor="start" >*VPORT_6</text>
<text transform="translate(969.4 660) scale(1 0.85)" font-family="Liberation Mono" font-weight="bold" font-size="12.3" fill="#FF8A12">20140728 Add Hall IC by ME.</text>
<text transform="translate(969.4 672.4) scale(1 0.85)" font-family="Liberation Mono" font-weight="bold" font-size="12.3" fill="#FF8A12">20141126 Un-stuff Hall IC by ME.</text>
<rect x="1065" y="745.3" width="343.6" height="200" fill="none" stroke="#111" stroke-width="2"/>
<line x1="1065" y1="802.5" x2="1408.6" y2="802.5" stroke="#111" stroke-width="1.8" />
<line x1="1065" y1="831" x2="1408.6" y2="831" stroke="#111" stroke-width="1.8" />
<line x1="1093.7" y1="802.5" x2="1093.7" y2="831" stroke="#111" stroke-width="1.5" />
<line x1="1379.8" y1="802.5" x2="1379.8" y2="831" stroke="#111" stroke-width="1.5" />
<line x1="1255.8" y1="831" x2="1255.8" y2="860" stroke="#111" stroke-width="1.5" />
<path d="M1159.8 773.4 A25.9 25.9 0 1 0 1133.7 799.3 L1133.7 790.2 A16.8 16.8 0 1 1 1150.6 773.4 Z" fill="#0A3D91"/>
<path d="M1133.6 776.2 H1170.2 V782.4 H1134.4 Z M1135.9 785.1 H1170.2 V790.8 H1140.5 Z M1142.7 793.4 H1170.2 V799.2 H1155.6 Q1148 797.5 1142.7 793.4 Z" fill="#E01B30"/>
<text x="1189.2" y="771.7" font-family="Liberation Sans" font-size="19" font-weight="bold" fill="#000" text-anchor="start" >Quanta Computer Inc.</text>
<text x="1189.2" y="797.9" font-family="Liberation Mono" font-size="15.6" font-weight="bold" fill="#000" text-anchor="start" >PROJECT : ZRF</text>
<text x="1065.5" y="810.3" font-family="Liberation Sans" font-size="8.5" font-weight="normal" fill="#000" stroke="#000" stroke-width="0.1" text-anchor="start" >Size</text>
<text x="1103.1" y="810.3" font-family="Liberation Sans" font-size="8.5" font-weight="normal" fill="#000" stroke="#000" stroke-width="0.1" text-anchor="start" >Document Number</text>
<text x="1103.1" y="825.6" font-family="Liberation Sans" font-size="13.6" font-weight="bold" fill="#000" text-anchor="start" >LED indicator</text>
<text x="1381" y="810.3" font-family="Liberation Sans" font-size="8.5" font-weight="normal" fill="#000" stroke="#000" stroke-width="0.1" text-anchor="start" >Rev</text>
<text x="1389.8" y="819.8" font-family="Liberation Sans" font-size="8.5" font-weight="normal" fill="#000" stroke="#000" stroke-width="0.1" text-anchor="start" >1B</text>
<text x="1065.5" y="839.5" font-family="Liberation Sans" font-size="8.5" font-weight="normal" fill="#000" stroke="#000" stroke-width="0.1" text-anchor="start" >Date:</text>
<text x="1101" y="839.5" font-family="Liberation Sans" font-size="8.5" font-weight="normal" fill="#000" stroke="#000" stroke-width="0.1" text-anchor="start" >Tuesday, December 02, 2014</text>
<text x="1257" y="839.5" font-family="Liberation Sans" font-size="8.5" font-weight="normal" fill="#000" stroke="#000" stroke-width="0.1" text-anchor="start" >Sheet</text>
<text x="1303" y="839.5" font-family="Liberation Sans" font-size="8.5" font-weight="normal" fill="#000" stroke="#000" stroke-width="0.1" text-anchor="start" >1</text>
<text x="1333" y="839.5" font-family="Liberation Sans" font-size="8.5" font-weight="normal" fill="#000" stroke="#000" stroke-width="0.1" text-anchor="start" >of</text>
<text x="1362" y="839.5" font-family="Liberation Sans" font-size="8.5" font-weight="normal" fill="#000" stroke="#000" stroke-width="0.1" text-anchor="start" >1</text></svg></div>
<div class="a" style="left:0;top:838px;width:1523px;height:20px;background:#0091D9"></div>
<div style="position:absolute;left:585.5px;top:840.61px;font:normal 15px 'Liberation Mono', monospace;line-height:17.25px;color:#fff;white-space:pre;-webkit-text-stroke:0.45px #fff;">XZZ Schematics https://www.xzztools.com</div>
</body></html>
